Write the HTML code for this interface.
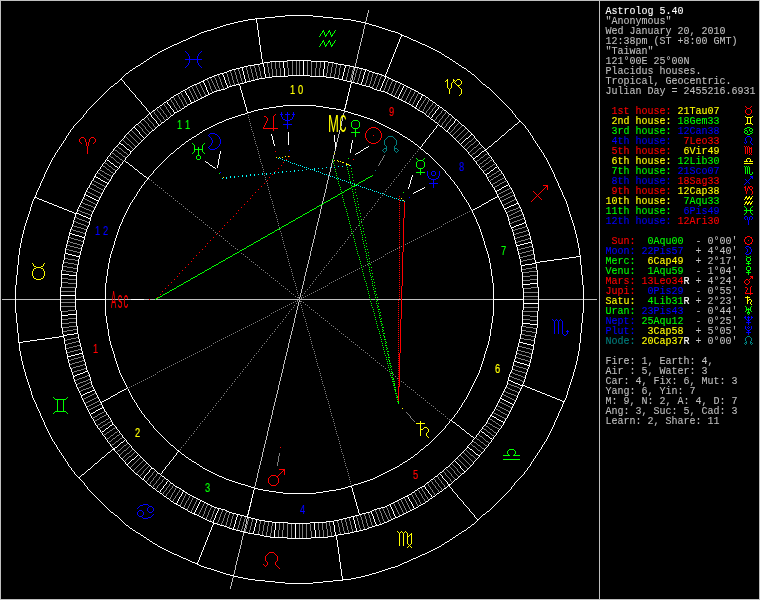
<!DOCTYPE html>
<html><head><meta charset="utf-8"><title>Astrolog 5.40</title>
<style>html,body{margin:0;padding:0;background:#000;overflow:hidden}svg{display:block}text{font-family:"Liberation Mono","DejaVu Sans Mono",monospace;white-space:pre}.s{font-size:10px;stroke-width:.1px}.h{font-size:13.4px}.o{font-family:"Liberation Sans","DejaVu Sans",sans-serif}</style></head>
<body>
<svg width="760" height="600" viewBox="0 0 760 600">
<rect width="760" height="600" fill="#000"/>
<g fill="none" stroke-width="1" shape-rendering="crispEdges">
<path transform="translate(0 .5)" stroke="#ffffff" d="m285 15h28m-38 1h10m28 0h10m-58 1h10m48 0h10m-78 1h10m68 0h10m-95 1h7m88 0h8m-108 1h5m103 0h5m-118 1h5m113 0h5m-127 1h4m123 0h4m-135 1h4m131 0h4m-143 1h4m139 0h3m-149 1h3m146 0h4m-156 1h3m153 0h3m-162 1h3m159 0h3m-168 1h3m165 0h3m-174 1h3m171 0h3m-181 1h4m177 0h3m-187 1h3m184 0h4m-194 1h3m191 0h3m-199 1h2m197 0h2m-203 1h2m201 0h1m-206 1h2m204 0h3m-212 1h3m209 0h3m-217 1h2m215 0h2m-221 1h2m219 0h2m-225 1h2m223 0h2m-230 1h3m227 0h3m-235 1h2m233 0h2m-239 1h2m237 0h2m-243 1h2m241 0h2m-248 1h3m245 0h3m-253 1h2m251 0h2m-257 1h2m255 0h2m-261 1h2m259 0h2m-265 1h2m263 0h2m-269 1h2m267 0h2m-273 1h2m271 0h2m-277 1h2m275 0h2m-281 1h2m279 0h2m-284 1h1m283 0h1m-287 1h2m285 0h2m-291 1h2m289 0h1m-293 1h1m292 0h2m-297 1h2m295 0h2m-300 1h1m299 0h1m-303 1h2m301 0h2m-306 1h1m140 0h24m141 0h1m-309 1h2m124 0h17m24 0h17m125 0h2m-312 1h1m120 0h6m58 0h6m121 0h1m-315 1h2m117 0h2m1 0h1m70 0h4m118 0h2m-318 1h1m113 0h6m78 0h6m114 0h1m-321 1h2m108 0h6m90 0h6m109 0h2m-325 1h2m106 0h4m102 0h4m107 0h1m-327 1h1m104 0h4m110 0h5m103 0h2m-331 1h2m101 0h4m119 0h4m101 0h2m-334 1h1m99 0h4m127 0h4m99 0h1m-337 1h2m97 0h3m135 0h2m98 0h1m-339 1h1m97 0h2m140 0h3m96 0h2m-342 1h1m95 0h3m145 0h3m95 0h1m-345 1h2m92 0h4m151 0h4m92 0h1m-347 1h1m91 0h3m159 0h3m90 0h2m-350 1h1m89 0h3m71 0h22m72 0h2m90 0h1m-352 1h1m88 0h2m58 0h16m22 0h16m58 0h1m1 0h1m88 0h1m-354 1h1m86 0h3m53 0h7m54 0h8m53 0h2m87 0h1m-270 1h2m50 0h6m69 0h5m50 0h2m86 0h1m-358 1h2m83 0h2m48 0h4m80 0h4m48 0h2m85 0h1m-360 1h1m2 0h1m81 0h1m46 0h4m88 0h4m46 0h2m84 0h1m-362 1h1m4 0h1m77 0h3m43 0h4m96 0h4m44 0h3m82 0h1m-364 1h1m81 0h2m43 0h1m1 0h1m104 0h4m43 0h2m81 0h1m-367 1h2m80 0h2m41 0h4m111 0h4m41 0h2m80 0h1m-369 1h1m10 0h1m68 0h3m39 0h4m119 0h3m40 0h2m79 0h2m-372 1h1m12 0h1m65 0h2m38 0h4m126 0h4m38 0h2m79 0h1m-375 1h2m14 0h1m62 0h2m37 0h3m134 0h4m36 0h2m78 0h1m-377 1h1m17 0h1m59 0h2m38 0h1m141 0h2m36 0h2m77 0h2m-380 1h1m77 0h1m37 0h2m145 0h2m36 0h2m77 0h1m-382 1h1m76 0h2m34 0h4m149 0h3m35 0h2m76 0h1m-384 1h1m22 0h1m52 0h2m32 0h4m156 0h4m33 0h2m75 0h1m-386 1h1m24 0h1m49 0h2m31 0h3m164 0h4m31 0h2m74 0h1m-388 1h1m26 0h1m47 0h1m31 0h2m171 0h2m31 0h1m74 0h1m-390 1h1m28 0h1m44 0h2m30 0h2m175 0h2m30 0h2m73 0h1m-392 1h1m30 0h1m41 0h2m31 0h1m179 0h2m30 0h2m72 0h1m-394 1h1m71 0h2m11 0h1m18 0h2m183 0h2m29 0h3m71 0h1m-396 1h1m71 0h1m30 0h2m187 0h2m30 0h1m71 0h1m-398 1h1m35 0h1m34 0h2m29 0h2m191 0h2m29 0h2m70 0h1m-400 1h1m37 0h1m32 0h1m29 0h2m195 0h1m30 0h1m70 0h1m-402 1h1m39 0h1m30 0h1m28 0h2m199 0h2m28 0h1m70 0h1m-404 1h1m41 0h1m27 0h2m27 0h2m203 0h2m16 0h1m10 0h2m69 0h1m-406 1h1m43 0h1m25 0h1m27 0h2m207 0h2m27 0h1m69 0h1m-408 1h1m68 0h2m25 0h3m211 0h2m26 0h2m68 0h1m-410 1h1m68 0h1m26 0h2m215 0h2m26 0h1m68 0h1m-412 1h1m48 0h1m19 0h1m5 0h1m19 0h2m219 0h2m25 0h1m68 0h1m-414 1h1m50 0h1m16 0h2m7 0h1m17 0h1m95 0h33m95 0h1m25 0h2m67 0h1m-416 1h1m52 0h1m14 0h1m25 0h2m89 0h7m33 0h7m89 0h2m25 0h1m67 0h1m-418 1h1m54 0h1m11 0h2m25 0h1m84 0h7m47 0h6m85 0h2m24 0h2m66 0h1m-420 1h1m66 0h1m14 0h1m10 0h2m79 0h6m60 0h7m79 0h2m25 0h1m66 0h1m-422 1h1m66 0h1m16 0h1m8 0h1m76 0h5m73 0h5m76 0h1m19 0h1m5 0h1m66 0h1m-424 1h1m59 0h1m5 0h2m24 0h2m73 0h4m83 0h4m73 0h2m16 0h1m7 0h2m65 0h1m-364 1h1m3 0h1m24 0h2m72 0h3m91 0h3m72 0h2m24 0h1m-296 1h1m22 0h3m70 0h4m97 0h3m71 0h2m23 0h1m-363 1h1m63 0h2m94 0h2m104 0h3m70 0h1m9 0h1m13 0h1m64 0h1m-430 1h1m63 0h1m24 0h1m67 0h4m109 0h4m67 0h1m7 0h1m15 0h2m63 0h1m-368 1h1m23 0h2m65 0h3m117 0h3m65 0h1m24 0h1m-306 1h1m23 0h1m64 0h3m123 0h3m63 0h2m23 0h1m-371 1h1m62 0h1m6 0h1m16 0h1m62 0h3m129 0h3m62 0h1m1 0h1m21 0h1m62 0h1m-436 1h1m62 0h1m8 0h1m14 0h1m60 0h3m135 0h3m60 0h1m23 0h1m62 0h1m-438 1h1m61 0h2m10 0h1m11 0h2m58 0h3m141 0h3m58 0h2m22 0h2m61 0h1m-440 1h1m61 0h1m13 0h1m9 0h1m58 0h2m147 0h2m58 0h1m23 0h1m-380 1h1m61 0h1m23 0h1m57 0h2m151 0h2m57 0h1m23 0h1m60 0h2m-444 1h1m61 0h1m22 0h2m55 0h3m155 0h2m56 0h2m22 0h1m58 0h1m2 0h1m-446 1h1m61 0h1m18 0h1m3 0h1m55 0h2m160 0h2m56 0h1m15 0h1m6 0h1m56 0h1m4 0h1m-448 1h1m60 0h2m22 0h1m54 0h2m164 0h2m55 0h1m13 0h1m8 0h1m53 0h2m6 0h1m-450 1h1m60 0h1m22 0h2m53 0h2m168 0h2m52 0h1m1 0h1m11 0h1m10 0h2m50 0h1m9 0h1m-368 1h1m53 0h2m172 0h2m53 0h2m8 0h1m13 0h1m48 0h1m-381 1h2m21 0h1m52 0h2m176 0h2m53 0h1m22 0h1m46 0h1m-441 1h1m59 0h1m2 0h1m19 0h1m51 0h2m180 0h2m44 0h1m7 0h1m22 0h1m44 0h1m14 0h1m-456 1h1m59 0h1m4 0h1m17 0h1m50 0h2m184 0h2m41 0h1m9 0h1m3 0h1m18 0h1m41 0h2m16 0h1m-398 1h1m6 0h1m14 0h2m49 0h2m188 0h2m50 0h1m22 0h1m39 0h1m-380 1h1m8 0h1m12 0h1m50 0h1m192 0h2m49 0h2m21 0h1m37 0h1m-439 1h1m58 0h1m21 0h1m49 0h2m195 0h2m33 0h1m15 0h1m21 0h1m35 0h1m22 0h1m-403 1h1m21 0h1m49 0h1m199 0h1m31 0h1m17 0h1m55 0h1m-380 1h1m13 0h1m7 0h1m48 0h2m201 0h2m28 0h1m19 0h1m20 0h2m31 0h1m-438 1h1m57 0h1m15 0h1m5 0h1m48 0h1m205 0h1m48 0h1m18 0h1m2 0h1m28 0h2m27 0h1m-390 1h1m3 0h1m47 0h2m207 0h2m47 0h1m16 0h1m31 0h1m-359 1h1m1 0h1m46 0h2m211 0h2m21 0h1m24 0h1m14 0h1m31 0h1m-378 1h1m20 0h1m46 0h1m215 0h1m19 0h1m26 0h1m11 0h2m7 0h1m23 0h1m-378 1h1m20 0h1m45 0h2m217 0h2m16 0h1m28 0h1m9 0h1m10 0h1m21 0h1m-435 1h1m56 0h1m20 0h1m45 0h1m221 0h1m45 0h1m7 0h1m12 0h1m19 0h1m36 0h1m-415 1h1m20 0h1m44 0h2m223 0h2m44 0h1m5 0h1m14 0h1m16 0h2m-357 1h1m44 0h1m227 0h1m10 0h1m33 0h1m3 0h1m31 0h1m-433 1h1m56 0h2m18 0h1m44 0h1m229 0h1m8 0h1m35 0h1m1 0h1m31 0h1m42 0h1m-419 1h1m2 0h2m15 0h1m43 0h2m231 0h2m43 0h1m19 0h1m11 0h1m-376 1h1m5 0h1m13 0h1m43 0h1m235 0h1m43 0h1m19 0h1m9 0h1m-432 1h1m55 0h1m7 0h1m11 0h1m43 0h1m187 0h1m49 0h1m2 0h1m40 0h1m19 0h1m6 0h2m47 0h1m-424 1h1m9 0h1m9 0h1m43 0h1m186 0h2m51 0h2m42 0h1m19 0h1m4 0h1m-375 1h1m11 0h1m7 0h1m42 0h2m185 0h2m98 0h1m19 0h1m2 0h1m-430 1h1m68 0h2m4 0h1m42 0h1m186 0h1m57 0h2m42 0h1m19 0h2m53 0h1m-412 1h1m2 0h1m42 0h1m185 0h2m60 0h1m42 0h1m17 0h2m-374 1h1m18 0h1m42 0h1m185 0h1m63 0h1m42 0h1m14 0h2m2 0h1m-431 1h1m54 0h1m61 0h1m184 0h2m65 0h1m55 0h1m5 0h1m54 0h1m-372 1h2m183 0h2m68 0h2m52 0h1m-352 1h1m40 0h1m184 0h1m72 0h1m40 0h1m9 0h1m-371 1h1m18 0h1m40 0h1m259 0h1m40 0h1m7 0h1m10 0h1m-382 1h1m18 0h1m40 0h1m261 0h1m40 0h1m4 0h2m12 0h1m-438 1h1m72 0h1m40 0h1m263 0h1m40 0h1m2 0h1m69 0h1m-380 1h1m265 0h1m40 0h2m-369 1h1m58 0h1m267 0h1m58 0h1m-386 1h2m15 0h1m39 0h1m269 0h1m39 0h1m-366 1h1m13 0h1m1 0h1m37 0h1m41 0h1m229 0h1m39 0h1m-372 1h1m5 0h1m15 0h2m34 0h1m43 0h2m228 0h1m57 0h1m-392 1h1m7 0h2m15 0h1m32 0h1m46 0h1m228 0h1m57 0h1m-383 1h1m7 0h1m7 0h1m30 0h1m48 0h1m228 0h1m38 0h1m-364 1h1m5 0h1m9 0h2m27 0h1m50 0h2m227 0h1m38 0h1m-378 1h1m13 0h2m15 0h1m25 0h1m53 0h1m227 0h1m56 0h1m-381 1h1m15 0h1m23 0h1m55 0h2m226 0h1m53 0h2m-379 1h1m15 0h1m21 0h1m58 0h1m226 0h1m37 0h1m13 0h1m-396 1h1m17 0h1m17 0h2m18 0h1m287 0h1m37 0h1m11 0h1m5 0h1m-402 1h1m17 0h1m20 0h1m16 0h1m289 0h1m37 0h1m8 0h2m7 0h1m-363 1h1m351 0h1m-352 1h1m349 0h1m-394 1h1m17 0h1m25 0h2m10 0h1m293 0h1m37 0h1m2 0h2m13 0h1m-390 1h1m28 0h1m8 0h1m295 0h1m37 0h1m-343 1h1m6 0h1m297 0h1m-355 1h1m49 0h2m3 0h1m299 0h1m-354 1h2m48 0h1m-49 1h2m47 0h2m-49 1h1m350 0h1m-360 1h1m8 0h2m43 0h1m305 0h1m53 0h1m-404 1h2m4 0h1m35 0h1m307 0h1m35 0h1m-385 1h2m0 1h2m34 1h1m311 0h1m35 0h1m-350 1h1m313 0h1m49 0h2m-4 1h2m-418 1h1m16 0h1m318 0h1m68 0h1m8 0h2m6 0h1m-371 1h1m281 0h2m34 0h1m42 0h1m-82 1h2m77 0h2m-83 1h2m77 0h2m-361 1h1m277 0h2m42 0h1m34 0h1m-82 1h2m-3 1h1m-328 2h2m0 1h2m45 0h1m327 0h1m34 0h1m-465 1h3m53 0h2m403 0h2m-460 1h2m53 0h2m399 0h2m-456 1h3m52 0h2m37 0h1m331 0h1m25 0h2m-451 1h2m52 0h3m390 0h2m-447 1h3m441 0h1m-442 1h2m82 0h1m335 0h1m18 0h2m-439 1h3m432 0h2m30 0h3m-467 1h2m428 0h2m30 0h2m-462 1h3m424 0h1m29 0h3m-457 1h2m420 0h2m28 0h2m-452 1h3m415 0h2m28 0h2m-447 1h2m411 0h2m27 0h3m-443 1h3m404 0h1m1 0h2m-408 1h2m0 1h3m0 1h2m0 1h5m0 1h2m0 1h2m0 1h3m0 1h2m0 1h2m434 4h1m-3 1h2m-5 1h3m-6 1h3m-5 1h2m-5 1h3m-444 6h2m0 1h3m0 1h4m0 1h3m0 1h2m444 5h4m-8 1h4m-8 1h4m-8 1h4m-454 8h2m0 1h4m0 1h4m0 1h4m496 0h4m-11 1h7m-14 1h7m-15 1h8m-15 1h7m-14 1h7m-12 1h5m-8 1h4m-11 1h7m-10 1h3m-463 9h7m0 1h7m454 8h7m-14 1h7m-469 11h14m0 4h30m26 0h13m350 0h30m0 4h14m-470 11h8m-14 1h6m455 8h7m0 1h7m-463 9h3m-10 1h7m-11 1h4m-8 1h5m-12 1h7m-14 1h7m-15 1h8m-15 1h7m-14 1h7m-10 1h3m496 0h4m0 1h4m0 1h4m0 1h2m-454 8h4m-8 1h4m-8 1h4m-7 1h3m443 5h3m0 1h3m0 1h4m0 1h3m0 1h2m-444 6h3m-5 1h2m-5 1h3m-6 1h3m-5 1h2m-3 1h1m434 4h2m0 1h2m0 1h2m0 1h3m0 1h2m0 1h5m0 1h2m-400 1h1m399 0h3m-404 1h1m403 0h2m-408 1h2m406 0h3m-443 1h3m27 0h2m411 0h2m-447 1h2m28 0h2m415 0h3m-453 1h3m28 0h2m420 0h2m-457 1h2m30 0h1m424 0h3m-462 1h2m30 0h2m428 0h2m-465 1h1m30 0h2m432 0h3m-439 1h2m437 0h2m-442 1h1m441 0h3m-447 1h2m390 0h2m53 0h2m-451 1h2m25 0h1m331 0h1m36 0h2m53 0h3m-456 1h2m398 0h2m54 0h2m-460 1h2m402 0h2m54 0h3m-465 1h1m34 0h1m327 0h1m44 0h2m0 1h2m0 1h2m-411 3h1m34 0h1m321 0h1m-361 1h2m-4 1h2m-4 1h2m42 0h1m317 0h1m-364 1h1m9 0h1m387 0h1m-401 1h2m-4 1h2m49 0h1m313 0h1m-350 1h1m35 0h1m311 0h1m34 1h2m0 1h2m-385 1h1m35 0h1m307 0h1m35 0h1m4 0h2m-404 1h1m53 0h1m305 0h1m43 0h1m9 0h1m-360 1h1m349 0h2m-351 1h1m301 0h2m47 0h2m-49 1h1m48 0h2m-50 1h2m49 0h1m-355 1h1m297 0h1m6 0h1m-343 1h1m37 0h1m295 0h1m8 0h1m28 0h1m-390 1h1m13 0h2m2 0h1m37 0h1m293 0h1m10 0h2m25 0h1m17 0h1m-394 1h1m5 0h1m343 0h1m23 0h1m-376 1h1m351 0h1m-363 1h1m7 0h2m46 0h1m289 0h1m16 0h1m38 0h1m-402 1h1m5 0h1m11 0h1m37 0h1m287 0h1m18 0h2m17 0h1m17 0h1m-396 1h1m13 0h1m37 0h1m285 0h1m21 0h1m15 0h1m-379 1h2m53 0h1m283 0h1m23 0h1m15 0h1m-381 1h1m56 0h1m281 0h1m25 0h1m15 0h2m13 0h1m-378 1h1m38 0h1m279 0h1m27 0h2m9 0h1m5 0h1m-364 1h1m38 0h1m277 0h1m30 0h1m7 0h1m7 0h1m-383 1h1m57 0h1m275 0h1m32 0h1m15 0h2m7 0h1m-392 1h1m57 0h1m273 0h1m34 0h2m15 0h1m5 0h1m-372 1h1m39 0h1m271 0h1m37 0h1m1 0h1m13 0h1m-366 1h1m39 0h1m269 0h1m39 0h1m15 0h2m-386 1h1m18 0h1m39 0h1m267 0h1m39 0h1m18 0h1m-369 1h1m41 0h1m265 0h1m-380 1h1m69 0h1m43 0h1m263 0h1m113 0h1m-438 1h1m12 0h2m4 0h1m40 0h1m261 0h1m40 0h1m18 0h1m-382 1h1m10 0h1m7 0h1m40 0h1m259 0h1m40 0h1m18 0h1m-435 1h1m63 0h1m9 0h1m40 0h1m257 0h1m40 0h1m73 0h1m-426 1h1m11 0h1m40 0h2m253 0h2m40 0h1m-358 1h1m5 0h1m55 0h1m251 0h1m61 0h1m-376 1h1m2 0h2m57 0h1m249 0h1m42 0h2m17 0h1m-374 1h1m18 0h1m42 0h1m247 0h1m42 0h1m2 0h1m15 0h1m-428 1h1m53 0h3m18 0h1m42 0h1m244 0h2m42 0h1m4 0h2m68 0h1m-430 1h1m22 0h1m42 0h2m241 0h1m43 0h1m7 0h1m-363 1h1m4 0h1m19 0h1m42 0h2m239 0h1m43 0h1m9 0h1m9 0h1m-424 1h1m47 0h2m6 0h1m19 0h1m40 0h1m2 0h1m237 0h1m43 0h1m11 0h1m7 0h1m55 0h1m-432 1h1m9 0h1m19 0h1m43 0h1m235 0h1m43 0h1m13 0h1m5 0h1m-376 1h1m11 0h1m19 0h1m43 0h2m231 0h2m43 0h1m15 0h2m2 0h1m-419 1h1m42 0h1m31 0h1m1 0h1m35 0h1m8 0h1m229 0h1m44 0h1m18 0h2m56 0h1m-433 1h1m31 0h1m3 0h1m33 0h1m10 0h1m227 0h1m44 0h1m-357 1h2m16 0h1m14 0h1m5 0h1m44 0h2m223 0h2m44 0h1m20 0h1m-415 1h1m36 0h1m19 0h1m12 0h1m7 0h1m45 0h1m221 0h1m45 0h1m20 0h1m56 0h1m-435 1h1m21 0h1m9 0h2m9 0h1m28 0h1m16 0h2m217 0h2m45 0h1m20 0h1m-378 1h1m23 0h1m7 0h1m12 0h1m26 0h1m19 0h1m215 0h1m46 0h1m20 0h1m-410 1h1m31 0h1m25 0h1m5 0h1m14 0h1m24 0h1m21 0h2m211 0h2m46 0h1m1 0h1m18 0h1m57 0h1m-436 1h1m31 0h1m16 0h1m47 0h2m207 0h2m47 0h1m3 0h1m-362 1h2m31 0h1m18 0h1m48 0h1m205 0h1m48 0h1m5 0h1m-364 1h1m31 0h2m20 0h1m19 0h1m28 0h2m201 0h2m48 0h1m7 0h1m13 0h1m-380 1h1m55 0h1m17 0h1m31 0h1m199 0h1m49 0h1m9 0h1m11 0h1m-403 1h1m22 0h1m35 0h1m21 0h1m15 0h1m33 0h2m195 0h2m49 0h1m21 0h1m58 0h1m-460 1h1m20 0h1m37 0h1m72 0h1m192 0h2m49 0h2m21 0h1m58 0h1m-439 1h1m39 0h1m20 0h3m49 0h2m188 0h2m50 0h1m15 0h1m6 0h1m-381 1h2m41 0h1m18 0h1m3 0h1m9 0h1m40 0h2m184 0h2m51 0h1m17 0h1m4 0h1m-396 1h1m14 0h1m44 0h1m22 0h1m7 0h1m43 0h2m180 0h2m52 0h1m19 0h1m2 0h1m59 0h1m-454 1h1m12 0h1m46 0h1m22 0h1m52 0h2m176 0h2m53 0h1m21 0h2m59 0h1m-441 1h1m48 0h1m13 0h1m8 0h1m53 0h2m172 0h2m53 0h2m-358 1h1m50 0h1m11 0h1m10 0h2m1 0h1m51 0h2m168 0h2m54 0h1m22 0h2m-389 1h1m6 0h2m52 0h2m8 0h1m13 0h1m54 0h2m164 0h2m55 0h1m1 0h1m20 0h1m61 0h1m-448 1h1m4 0h1m56 0h1m6 0h1m15 0h1m55 0h2m160 0h2m56 0h1m3 0h1m18 0h1m61 0h1m-446 1h1m2 0h1m58 0h1m22 0h2m55 0h3m155 0h2m56 0h2m22 0h1m61 0h1m-444 1h2m60 0h1m23 0h1m57 0h2m151 0h2m57 0h1m23 0h1m61 0h1m-380 1h1m23 0h1m58 0h2m147 0h2m58 0h1m9 0h1m13 0h1m61 0h1m-440 1h1m61 0h2m22 0h2m58 0h3m141 0h3m58 0h2m11 0h1m10 0h2m61 0h1m-438 1h1m62 0h1m23 0h1m60 0h3m135 0h3m60 0h1m14 0h1m8 0h1m62 0h1m-436 1h1m62 0h1m21 0h1m1 0h1m62 0h3m129 0h3m62 0h1m16 0h1m6 0h1m62 0h1m-434 1h1m62 0h1m23 0h1m64 0h3m123 0h3m63 0h2m23 0h1m62 0h1m-369 1h1m23 0h2m65 0h3m117 0h3m65 0h1m24 0h1m-304 1h1m16 0h1m7 0h1m67 0h4m109 0h4m67 0h1m22 0h3m-366 1h1m63 0h2m13 0h1m9 0h1m70 0h3m104 0h2m94 0h1m64 0h1m-428 1h1m64 0h1m23 0h2m71 0h3m97 0h4m70 0h3m22 0h1m64 0h1m-361 1h1m24 0h2m72 0h3m91 0h3m72 0h2m24 0h1m3 0h1m-298 1h2m7 0h1m16 0h2m73 0h4m83 0h4m73 0h2m24 0h2m5 0h1m-364 1h1m66 0h1m5 0h1m19 0h1m76 0h5m73 0h5m76 0h1m8 0h1m16 0h1m66 0h1m-422 1h1m66 0h1m25 0h2m79 0h6m60 0h7m79 0h2m10 0h1m14 0h1m66 0h1m-420 1h1m66 0h2m24 0h2m84 0h7m47 0h6m85 0h1m25 0h2m11 0h1m54 0h1m-418 1h1m67 0h1m25 0h2m89 0h7m33 0h7m89 0h2m25 0h1m14 0h1m52 0h1m-416 1h1m67 0h2m25 0h1m95 0h33m95 0h1m17 0h1m7 0h2m16 0h1m50 0h1m-414 1h1m68 0h1m25 0h2m219 0h2m19 0h1m5 0h1m19 0h1m48 0h1m-412 1h1m68 0h1m26 0h2m215 0h2m26 0h1m68 0h1m-410 1h1m68 0h2m14 0h1m11 0h2m211 0h3m25 0h2m68 0h1m-408 1h1m69 0h1m27 0h2m207 0h2m27 0h1m25 0h1m43 0h1m-406 1h1m69 0h2m27 0h2m203 0h2m27 0h2m27 0h1m41 0h1m-404 1h1m70 0h1m28 0h2m199 0h2m28 0h1m30 0h1m39 0h1m-402 1h1m70 0h1m29 0h2m195 0h2m29 0h1m32 0h1m37 0h1m-400 1h1m70 0h2m29 0h2m191 0h2m13 0h1m15 0h2m34 0h1m35 0h1m-398 1h1m71 0h1m30 0h2m187 0h2m30 0h1m71 0h1m-396 1h1m71 0h3m29 0h2m183 0h2m30 0h2m71 0h1m-394 1h1m72 0h2m30 0h2m179 0h1m31 0h2m41 0h1m30 0h1m-392 1h1m73 0h2m30 0h2m175 0h2m30 0h2m44 0h1m28 0h1m-390 1h1m74 0h1m31 0h2m171 0h2m31 0h1m47 0h1m26 0h1m-388 1h1m74 0h2m31 0h3m164 0h4m31 0h2m49 0h1m24 0h1m-386 1h1m75 0h2m32 0h4m156 0h4m33 0h2m52 0h1m22 0h1m-384 1h1m76 0h2m34 0h4m149 0h3m35 0h2m76 0h1m-382 1h1m77 0h1m37 0h2m145 0h2m36 0h2m77 0h1m-380 1h1m77 0h2m37 0h2m141 0h1m37 0h2m60 0h1m16 0h2m-378 1h2m77 0h2m37 0h3m134 0h4m36 0h2m63 0h1m14 0h1m-374 1h1m78 0h3m37 0h4m126 0h4m38 0h2m66 0h1m12 0h1m-372 1h1m79 0h3m39 0h4m119 0h3m40 0h2m69 0h1m9 0h2m-370 1h2m80 0h2m41 0h4m111 0h4m41 0h2m80 0h1m-366 1h1m81 0h2m43 0h4m103 0h4m43 0h2m81 0h1m-364 1h1m82 0h2m44 0h4m96 0h4m44 0h3m77 0h1m4 0h1m-362 1h1m83 0h2m46 0h4m88 0h4m46 0h2m81 0h1m2 0h1m-360 1h1m84 0h2m48 0h4m80 0h4m48 0h2m84 0h2m-358 1h1m85 0h2m50 0h6m69 0h5m50 0h2m-269 1h1m86 0h3m53 0h7m54 0h8m53 0h2m87 0h1m-354 1h1m88 0h1m59 0h16m22 0h16m58 0h3m88 0h1m-352 1h1m89 0h3m71 0h22m72 0h2m90 0h1m-350 1h1m91 0h3m159 0h3m90 0h2m-348 1h2m92 0h4m151 0h4m92 0h1m-344 1h1m95 0h3m145 0h3m95 0h1m-342 1h1m97 0h2m140 0h3m96 0h2m-340 1h2m97 0h3m135 0h2m98 0h1m-336 1h1m99 0h4m127 0h4m99 0h1m-334 1h2m101 0h4m119 0h4m101 0h2m-331 1h1m104 0h4m110 0h5m103 0h2m-328 1h2m106 0h4m102 0h4m107 0h1m-324 1h2m108 0h6m90 0h6m109 0h2m-321 1h1m113 0h6m78 0h6m114 0h1m-318 1h2m117 0h4m70 0h2m1 0h1m118 0h2m-315 1h1m120 0h6m58 0h6m121 0h1m-312 1h2m124 0h17m24 0h17m125 0h2m-309 1h1m140 0h24m141 0h1m-306 1h2m301 0h2m-303 1h1m299 0h1m-300 1h2m295 0h2m-297 1h1m292 0h2m-294 1h2m289 0h1m-290 1h2m285 0h2m-287 1h1m283 0h1m-284 1h2m279 0h2m-281 1h2m275 0h2m-277 1h2m271 0h2m-273 1h2m267 0h2m-269 1h2m263 0h2m-265 1h2m259 0h2m-261 1h2m255 0h2m-257 1h2m251 0h2m-253 1h3m245 0h3m-248 1h2m241 0h2m-243 1h2m237 0h2m-239 1h2m233 0h2m-235 1h3m227 0h3m-230 1h2m223 0h2m-225 1h2m219 0h2m-221 1h2m215 0h2m-217 1h3m209 0h3m-212 1h3m204 0h2m-206 1h1m201 0h2m-203 1h2m197 0h2m-199 1h3m191 0h3m-194 1h3m184 0h4m-188 1h4m177 0h3m-180 1h3m171 0h3m-174 1h3m165 0h3m-168 1h3m159 0h3m-162 1h3m153 0h3m-156 1h3m146 0h4m-150 1h4m139 0h3m-142 1h4m131 0h4m-135 1h4m123 0h4m-127 1h5m113 0h5m-118 1h5m103 0h5m-108 1h7m87 0h9m-96 1h10m68 0h10m-78 1h10m48 0h10m-58 1h10m28 0h10m-38 1h28"/>
<path transform="translate(.5 0)" stroke="#ffffff" d="m15 285v28m1-38v10m0 28v10m1-58v10m0 48v10m1-78v10m0 68v10m1-95v7m0 87v9m1-108v5m0 103v5m1-118v5m0 113v5m1-127v4m0 123v4m1-135v4m0 131v4m1-143v4m0 139v3m1-149v3m0 146v4m1-156v3m0 153v3m1-162v3m0 159v3m1-168v3m0 165v3m1-174v3m0 171v3m1-181v4m0 177v3m1-187v3m0 184v4m1-194v3m0 191v3m1-199v2m0 197v2m1-202v1m0 201v2m1-207v2m0 205v2m1-212v3m0 209v3m1-217v2m0 215v2m1-221v2m0 219v2m1-225v2m0 223v2m1-230v3m0 227v3m1-235v2m0 233v2m1-239v2m0 237v2m1-243v2m0 241v2m1-248v3m0 245v3m1-253v2m0 251v2m1-257v2m0 255v2m1-261v2m0 259v2m1-265v2m0 263v2m1-269v2m0 267v2m1-273v2m0 271v2m1-277v2m0 275v2m1-281v2m0 279v2m2-286v2m0 285v2m1-291v2m1 290v2m1-297v2m0 295v2m2-302v2m0 301v2m1-165v24m1-167v2m0 124v17m0 24v17m0 125v2m1-191v6m0 58v6m1-193v2m0 117v4m0 70v1m0 2v1m0 118v2m1-204v6m0 78v6m1-206v2m0 108v6m0 90v6m0 109v2m1-325v2m0 106v4m0 102v4m1-114v4m0 110v5m0 103v2m1-331v2m0 101v4m0 119v4m0 101v2m1-234v4m0 127v4m1-237v2m0 97v3m0 135v2m1-142v2m0 140v3m0 96v2m1-246v3m0 145v3m1-249v2m0 92v4m0 151v4m1-162v3m0 159v3m0 90v2m1-260v3m0 71v11m0 1v10m0 72v2m1-172v1m0 59v16m0 22v16m0 58v3m1-178v3m0 53v7m0 54v8m0 53v2m1-182v2m0 50v6m0 69v5m0 50v2m1-186v2m0 48v1m0 1v2m0 80v4m0 48v2m0 85v1m1-276v2m0 46v4m0 88v4m0 46v2m1-194v2m0 44v4m0 96v4m0 44v3m1-199v2m0 43v3m0 104v2m0 1v1m0 43v2m1-285v2m0 80v2m0 41v4m0 111v4m0 41v2m1-208v3m0 39v4m0 119v3m0 40v2m0 79v2m1-293v3m0 37v4m0 126v4m0 38v2m1-295v2m0 77v2m0 37v3m0 134v4m0 36v2m1-220v2m0 37v2m0 141v1m0 37v2m0 77v2m1-264v2m0 145v2m0 36v2m1-227v2m0 34v4m0 149v3m0 35v2m1-231v2m0 32v4m0 156v4m0 33v2m1-235v2m0 31v3m0 164v4m0 31v2m1-206v2m0 171v2m1-209v2m0 30v2m0 175v2m0 30v2m1-244v1m0 30v2m0 179v1m0 31v2m1-249v3m0 29v2m0 183v2m0 30v2m1-221v2m0 187v2m1-224v2m0 29v2m0 191v2m0 29v2m1-227v1m0 195v2m1-201v2m0 199v2m1-234v2m0 27v2m0 203v1m0 28v2m1-238v2m0 206v3m1-241v2m0 26v2m0 211v3m0 25v2m1-245v2m0 216v1m1-221v2m0 219v2m1-251v2m0 121v33m0 121v2m1-254v2m0 89v7m0 33v7m0 89v2m1-257v2m0 25v1m0 84v7m0 47v6m0 111v2m1-260v1m0 80v6m0 60v7m0 79v2m1-159v5m0 73v5m1-188v2m0 24v2m0 73v4m0 83v4m0 73v2m0 24v2m1-269v2m0 72v3m0 91v3m0 72v2m1-247v2m0 71v3m0 97v3m0 71v3m1-276v2m0 94v3m0 103v3m1-113v4m0 109v4m0 90v1m0 1v1m1-280v2m0 65v3m0 117v3m1-126v3m0 123v3m0 63v2m1-197v3m0 129v3m1-138v3m0 135v3m1-228v1m0 23v2m0 58v3m0 141v3m0 58v2m0 22v2m1-233v2m0 147v2m1-297v1m0 143v2m0 151v2m1-215v2m0 55v3m0 155v2m0 56v2m1-220v2m0 160v2m1-299v2m0 52v2m0 77v2m0 164v2m1-225v2m0 53v2m0 168v2m0 77v2m1-253v2m0 172v2m0 53v2m1-233v2m0 254v1m1-259v2m0 180v2m1-303v2m0 115v2m0 184v2m1-242v3m0 49v2m0 188v2m1 0v2m0 49v2m1-248v2m0 195v2m2-273v1m0 70v2m0 201v2m1-307v2m1 97v2m0 207v2m1-213v2m0 211v2m2-275v2m0 55v2m0 217v2m2-308v2m0 82v2m0 223v2m2 65v1m1-297v2m0 231v2m0 59v2m2-370v2m1 69v1m1-3v1m1-66v1m0 308v2m0 47v2m1-358v1m1 0v2m0 350v1m2-297v2m0 253v2m3-307v2m2 1v1m2 365v2m2-21v2m1 13v2m2-21v2m1 13v2m1-382v2m2 358v2m1-358v2m3 2v2m0 345v2m1-346v1m2 339v2m1 46v2m1-4v2m1-4v2m2-5v2m1-4v2m3-403v2m1 0v2m2 1v2m1 0v2m1 0v2m4 410v1m1-3v2m1-4v2m1-4v2m0 54v1m0 1v1m1-61v2m0 54v2m1-60v2m0 53v3m1-59v1m0 53v2m1-5v3m1-5v2m1-472v1m0 1v1m0 464v3m1-467v2m0 460v2m1-462v2m0 455v3m1-458v3m0 450v2m1-452v2m0 445v3m1-448v3m0 440v2m1-5v3m1-5v2m1-5v3m1-5v2m1-7v5m1-7v2m1-5v3m1-5v2m1-350v3m0 343v2m1-354v6m0 344v2m1-357v5m1-8v3m2-80v1m1 0v2m1 0v3m1 0v3m1 0v2m1 0v3m6 439v2m1-5v3m1-7v4m1-7v3m1-5v2m2-432v1m1 0v4m1 0v3m1-25v3m0 22v4m1-26v4m0 22v3m1-25v4m0 21v4m1-25v4m0 21v3m1 0v4m1 0v1m0 402v2m1-6v4m1-8v4m1-8v4m1-8v4m1-8v4m1-8v4m0 37v2m1-44v1m0 37v4m1-8v4m1-508v4m0 497v3m1-500v7m1 0v7m1 0v8m1 0v7m1 0v7m1 0v5m1 0v3m1 0v7m1 0v3m6 57v2m1 0v4m1 0v4m1 0v2m0 384v7m1-14v7m8-468v6m1 0v8m4 56v13m7 379v14m8-477v14m11 448v7m1 0v7m8-468v7m1-14v7m9 453v3m1-390v7m0 383v7m1-390v7m0 383v3m1 0v5m1 0v7m1 0v7m1 0v8m1 0v7m1 0v7m1-500v3m0 497v3m1-507v4m1-8v4m0 36v2m1-44v2m0 36v4m1-8v4m1-8v4m1-8v4m1-8v4m1-8v4m0 61v4m1-70v1m0 59v6m0 338v1m1-348v3m0 345v4m1 0v3m0 22v3m1-25v4m0 21v4m1-25v3m0 22v4m1-26v4m0 22v3m1-25v3m1 0v4m1 0v1m2-432v2m1-5v3m1-7v4m1-7v3m1-5v2m6 439v3m1 0v2m1 0v3m1 0v3m1 0v2m1 0v1m4-437v2m1-4v2m1-5v3m1-5v2m1-4v2m1-7v5m1-7v2m1-5v3m1-5v2m1-5v3m1-5v2m0 440v3m1-448v3m0 445v2m1-452v2m0 450v2m1-457v3m0 454v3m1-462v2m0 460v2m1-467v3m0 464v1m1-470v2m1-5v3m1-5v2m0 52v3m1-60v3m0 52v2m1-59v2m0 53v2m1-60v1m0 1v1m0 53v2m1-4v2m1-4v2m5 99v2m0 308v2m1-315v3m0 312v2m1-321v4m1-7v3m0 322v2m1-329v2m0 327v2m1 0v2m3-403v2m1-4v2m1-4v2m2-5v2m0 48v1m1-53v2m1 46v2m2 339v1m1-346v2m0 345v2m3 2v2m1-358v2m2 358v2m1-382v2m1 13v2m2-21v2m1 13v2m2-21v2m4 367v2m3-307v2m0 253v2m2-298v1m0 351v2m2-357v2m0 292v2m0 62v2m1-310v2m1 240v1m1 69v2m2-370v2m0 59v2m0 231v2m1-297v1m2 65v2m0 223v2m0 82v2m2-308v2m0 217v2m1 56v2m1-276v2m0 211v2m1-213v2m0 207v2m1 97v2m1-307v2m0 201v2m0 70v1m2-273v2m0 195v2m1-4v2m0 49v1m1-295v2m0 49v2m0 188v2m1-190v2m0 184v2m0 116v2m1-304v2m0 180v2m1-258v1m0 253v2m1-179v3m0 172v2m0 53v2m1-283v1m0 53v2m0 168v2m0 77v2m1-328v2m0 77v2m0 164v2m0 132v2m1-300v2m0 160v2m1-219v2m0 55v3m0 155v2m0 56v2m1-215v2m0 151v2m0 143v1m1-297v2m0 147v2m1-233v2m0 22v2m0 58v3m0 141v3m0 58v2m0 23v1m1-228v3m0 135v3m1-138v3m0 129v3m1-132v3m0 123v3m0 63v2m1-258v2m0 65v3m0 117v3m1-120v4m0 109v4m0 91v2m1-206v3m0 103v3m1-180v3m0 71v3m0 97v3m0 71v2m1-247v2m0 72v3m0 91v3m0 72v2m1-269v2m0 24v2m0 73v4m0 83v4m0 73v2m0 24v2m1-188v5m0 73v5m1-159v2m0 79v6m0 60v7m0 80v1m1-260v2m0 110v7m0 47v6m0 85v1m0 25v2m1-257v2m0 89v7m0 33v7m0 89v2m1-254v2m0 121v33m0 121v2m1-251v2m0 219v2m1-221v1m0 216v2m1-245v2m0 25v3m0 211v2m0 26v2m1-241v3m0 206v2m1-238v2m0 28v1m0 203v2m0 27v2m1-234v2m0 199v2m1-201v2m0 195v1m1-227v2m0 29v2m0 191v2m0 29v2m1-224v2m0 187v2m1-221v2m0 30v2m0 183v2m0 29v3m1-249v2m0 31v1m0 179v2m0 30v1m1-244v2m0 30v2m0 175v2m0 30v2m1-209v2m0 171v2m1-206v2m0 31v3m0 164v4m0 31v2m1-235v2m0 32v4m0 156v4m0 33v2m1-231v2m0 34v4m0 149v3m0 35v2m1-189v2m0 145v2m0 36v2m1-224v2m0 38v1m0 141v2m0 36v2m0 77v2m1-378v2m0 77v2m0 37v3m0 134v4m0 36v2m1-216v2m0 38v4m0 126v4m0 39v1m1-212v3m0 39v4m0 119v2m0 41v2m0 79v2m1-370v2m0 80v2m0 41v4m0 111v4m0 41v2m1-203v2m0 43v1m0 1v1m0 104v4m0 43v2m1-199v2m0 44v4m0 96v4m0 44v3m1-194v1m0 46v4m0 88v4m0 46v2m1-275v1m0 84v2m0 48v4m0 80v3m0 49v2m1-186v2m0 50v6m0 69v5m0 50v2m1-182v3m0 53v7m0 54v8m0 53v2m1-177v2m0 58v16m0 22v16m0 58v1m0 1v1m1-173v3m0 71v11m0 1v10m0 72v2m1-167v3m0 159v3m0 90v2m1-348v2m0 92v4m0 151v4m1-155v3m0 145v3m1-148v2m0 140v3m0 96v2m1-340v2m0 97v3m0 135v2m1-137v4m0 127v4m1-234v2m0 101v4m0 119v4m0 101v2m1-226v2m0 1v1m0 110v5m0 103v2m1-328v2m0 106v4m0 102v4m1-216v2m0 108v6m0 90v6m0 109v2m1-207v6m0 78v6m1-203v2m0 117v2m0 72v4m0 118v2m1-194v6m0 58v6m1-190v2m0 124v17m0 24v17m0 125v2m1-168v24m1-164v2m0 301v2m2-302v2m0 295v2m1-4v2m1-294v2m1 0v2m0 285v2m2-286v2m0 279v2m1-281v2m0 275v2m1-277v2m0 271v2m1-273v2m0 267v2m1-269v2m0 263v2m1-265v2m0 259v2m1-261v2m0 255v2m1-257v2m0 251v2m1-253v3m0 245v3m1-248v2m0 241v2m1-243v2m0 237v2m1-239v2m0 233v2m1-235v3m0 227v3m1-230v2m0 223v2m1-225v2m0 219v2m1-221v2m0 215v2m1-217v3m0 209v3m1-212v2m0 205v2m1-207v2m0 201v1m1-202v2m0 197v2m1-199v3m0 191v3m1-194v3m0 184v4m1-188v4m0 177v3m1-180v3m0 171v3m1-174v3m0 165v3m1-168v3m0 159v3m1-162v3m0 153v3m1-156v3m0 146v4m1-150v4m0 139v3m1-142v4m0 131v4m1-135v4m0 123v4m1-127v5m0 113v5m1-118v5m0 103v5m1-108v7m0 88v8m1-96v10m0 68v10m1-78v10m0 48v10m1-58v10m0 28v10m1-38v28"/>
<path transform="translate(0 .5)" stroke="#bfbfbf" d="m0 0h760m-395 24h1m-19 76h1m-2 4h1m-2 4h1m-12 46h1m-333 145h13m1 0h44m46 0h25m13 0h5m1 0h5m1 0h143m1 0h70m1 0h4m1 0h25m1 0h91m46 0h44m1 0h13m-346 203h1m-2 4h1m-2 4h1m-2 4h1m-2 4h1m-15 56h1m-234 25h760"/>
<path transform="translate(.5 0)" stroke="#bfbfbf" d="m0 1v598m230-13v3m1-7v4m1-8v4m1-6v2m1-8v4m1-9v5m1-9v4m1-8v4m1-8v4m1-8v4m1-8v4m1-9v5m1-9v4m1-8v4m1-8v4m1-8v4m1-9v5m8-38v2m1-6v4m1-8v4m1-9v5m1-9v4m1-8v4m1-8v4m1-8v4m1-9v5m1-9v4m1-8v4m1-8v4m1-8v4m1-9v5m1-9v4m1-8v4m1-8v4m1-8v4m1-9v5m1-9v4m1-8v4m1-8v4m1-8v4m1-8v4m1-9v5m1-9v4m1-8v4m1-8v4m1-8v4m1-9v5m1-9v4m1-8v4m1-8v4m1-8v4m1-9v5m1-9v4m1-8v4m1-8v4m1-8v4m1-8v4m1-9v5m1-9v4m1-8v4m1-8v4m1-8v4m1-9v2m0 1v2m1-9v4m1-8v4m1-8v4m1-8v4m1-9v5m1-9v4m1-8v4m1-8v4m1-8v4m1-8v4m1-9v5m1-9v4m1-8v4m1-8v4m1-8v4m1-9v5m1-9v4m1-8v4m1-8v4m1-8v4m1-9v5m1-9v4m1-8v3m1-7v4m1-8v4m1-8v4m1-9v5m1-9v4m1-8v4m1-8v4m1-8v4m1-9v5m1-8v3m1-8v4m1-8v2m1-4v2m1-9v5m1-9v4m1-8v4m1-8v4m1-8v4m1-9v5m1-9v4m1-8v4m1-6v2m7-33v2m1-7v5m1-9v4m1-7v3m1-8v4m1-8v4m1-9v5m1-9v4m1-8v4m1-8v4m1-8v4m1-8v4m1-9v5m1-9v4m1-8v2m1-6v4m1-8v4m1-7v3m231-12v598m160-598v598"/>
<path transform="translate(0 .5)" stroke="#7f7f7f" d="m369 72h1m-144 1h1m146 0h1m-164 5h1m185 4h1m-198 1h1m200 1h1m-206 1h1m211 2h1m-220 1h1m222 1h1m-29 1h1m-172 1h1m202 0h1m2 2h1m-25 2h1m17 1h1m-240 1h1m9 0h1m-14 2h1m9 0h1m-6 1h1m248 0h1m-253 2h1m249 1h1m-236 1h1m238 0h1m-249 1h1m252 0h1m-267 1h1m18 0h1m235 0h1m9 0h1m-256 1h1m258 0h1m-255 1h1m252 0h1m-273 1h1m5 0h1m250 0h1m9 0h1m-267 1h1m14 0h1m249 0h1m14 0h1m-290 1h1m4 0h1m263 0h1m8 0h1m-273 1h1m9 0h1m260 0h1m-267 1h1m82 0h1m177 0h1m14 0h1m-286 1h1m9 0h1m273 0h1m4 0h1m-289 1h1m4 0h1m86 0h1m179 0h1m9 0h1m4 0h1m-282 1h1m274 0h1m-291 1h1m19 0h1m80 0h1m198 0h1m4 0h1m-295 1h1m282 0h1m4 0h1m4 0h1m-293 1h1m4 0h1m84 0h1m185 0h1m4 0h1m-297 1h1m4 0h1m284 0h1m-290 1h1m4 0h1m98 0h1m194 0h1m4 0h1m-310 1h1m5 0h1m4 0h1m9 0h1m276 0h1m4 0h1m4 0h1m-308 1h1m5 0h1m4 0h1m97 0h1m196 0h1m10 0h1m-317 1h1m314 0h1m-320 1h1m4 0h1m106 0h1m190 0h1m14 0h1m-318 1h1m4 0h1m4 0h1m4 0h1m290 0h1m9 0h1m5 0h1m-322 1h1m9 0h1m4 0h1m95 0h1m192 0h1m15 0h1m-320 1h1m9 0h1m307 0h1m5 0h1m-320 1h1m5 0h1m98 0h1m201 0h1m4 0h1m5 0h1m-334 1h1m15 0h1m304 0h1m4 0h1m5 0h1m-332 1h1m10 0h1m4 0h1m103 0h1m198 0h1m4 0h1m5 0h1m5 0h1m-336 1h1m10 0h1m4 0h1m300 0h1m4 0h1m5 0h1m5 0h1m-340 1h1m5 0h1m10 0h1m107 0h1m200 0h1m5 0h1m5 0h1m-338 1h1m5 0h1m10 0h1m306 0h1m5 0h1m5 0h1m-336 1h1m5 0h1m116 0h1m198 0h1m5 0h1m5 0h1m-340 1h1m5 0h1m5 0h1m319 0h1m5 0h1m-338 1h1m5 0h1m5 0h1m115 0h1m201 0h1m5 0h1m-336 1h1m5 0h1m5 0h1m315 0h1m5 0h1m11 0h1m-346 1h1m5 0h1m5 0h1m113 0h1m205 0h1m11 0h1m-350 1h1m5 0h1m5 0h1m5 0h1m317 0h1m11 0h1m4 0h1m-353 1h1m5 0h1m5 0h1m118 0h1m202 0h1m10 0h2m4 0h1m-351 1h1m5 0h1m5 0h1m330 0h1m5 0h1m-349 1h1m5 0h1m5 0h1m116 0h1m211 0h1m5 0h1m-347 1h2m4 0h1m332 0h1m4 0h2m5 0h1m-350 1h1m4 0h1m121 0h1m208 0h1m4 0h1m6 0h1m-361 1h1m12 0h1m4 0h1m328 0h1m4 0h1m6 0h1m-359 1h1m12 0h1m125 0h1m210 0h1m5 0h2m5 0h1m-363 1h2m11 0h1m334 0h1m5 0h1m5 0h2m-367 1h1m6 0h1m135 0h1m160 0h1m47 0h1m5 0h1m5 0h1m-364 1h2m5 0h1m348 0h1m5 0h1m-361 1h1m5 0h1m134 0h1m158 0h1m52 0h1m5 0h1m-359 1h1m5 0h2m343 0h1m5 0h1m-364 1h2m5 0h2m5 0h1m131 0h1m156 0h1m57 0h2m12 0h1m-374 1h1m6 0h1m5 0h1m344 0h1m12 0h2m-372 1h1m6 0h1m136 0h1m124 0h1m28 0h1m57 0h1m12 0h1m-375 1h1m5 0h2m5 0h2m358 0h1m-373 1h2m5 0h1m6 0h1m133 0h1m152 0h1m68 0h2m5 0h2m-377 1h1m5 0h1m360 0h1m6 0h1m-374 1h1m5 0h2m138 0h1m149 0h1m68 0h1m6 0h1m-372 1h1m6 0h1m258 0h1m95 0h2m5 0h2m4 0h2m-376 1h1m143 0h1m148 0h1m66 0h1m6 0h1m5 0h1m-373 1h2m363 0h1m5 0h1m-384 1h2m12 0h1m141 0h1m145 0h1m72 0h2m4 0h2m-381 1h1m12 0h1m358 0h1m5 0h1m7 0h2m-387 1h1m153 0h1m115 0h1m26 0h1m78 0h1m7 0h1m-390 1h2m4 0h2m371 0h2m6 0h2m-387 1h1m5 0h1m150 0h1m141 0h1m76 0h1m7 0h1m-384 1h1m5 0h1m374 0h2m-382 1h2m4 0h2m148 0h1m138 0h1m83 0h1m-387 1h2m7 0h1m5 0h1m368 0h2m13 0h1m-398 1h2m6 0h1m152 0h1m137 0h1m95 0h2m-395 1h1m6 0h2m383 0h1m-399 1h2m5 0h2m6 0h1m150 0h1m134 0h1m94 0h2m5 0h1m-402 1h1m6 0h2m383 0h2m5 0h2m-400 1h2m6 0h2m153 0h1m133 0h1m92 0h1m6 0h1m-396 1h1m7 0h1m377 0h2m5 0h2m-394 1h2m159 0h1m130 0h1m91 0h1m5 0h2m-390 1h1m386 0h1m8 0h2m-397 1h2m40 0h1m115 0h1m128 0h1m96 0h2m7 0h2m-409 1h1m15 0h1m41 0h1m338 0h1m7 0h2m-406 1h2m170 0h1m126 0h1m103 0h1m6 0h2m-410 1h2m55 0h1m341 0h2m5 0h2m-413 1h1m6 0h2m167 0h1m123 0h1m101 0h2m5 0h2m-410 1h2m6 0h2m53 0h1m336 0h1m6 0h1m-406 1h2m6 0h2m53 0h1m109 0h1m122 0h1m106 0h2m-403 1h1m7 0h2m389 0h2m-408 1h1m7 0h2m60 0h1m108 0h1m119 0h1m105 0h1m-405 1h2m7 0h2m60 0h1m347 0h2m-419 1h2m7 0h2m165 0h1m117 0h1m120 0h2m-415 1h2m67 0h1m341 0h2m-420 1h1m8 0h2m171 0h1m115 0h1m117 0h2m-417 1h2m8 0h2m65 0h1m335 0h2m7 0h2m-422 1h2m8 0h2m65 0h1m101 0h1m113 0h1m115 0h2m7 0h2m-418 1h2m404 0h1m7 0h2m-414 1h2m73 0h1m100 0h1m111 0h1m121 0h2m6 0h2m-418 1h2m73 0h1m330 0h2m6 0h2m-414 1h2m170 0h1m109 0h1m119 0h2m6 0h2m-426 1h1m88 0h1m332 0h2m-423 1h2m184 0h1m106 0h1m125 0h2m8 0h2m-429 1h2m86 0h1m326 0h2m8 0h2m-425 1h2m86 0h1m94 0h1m104 0h1m123 0h1m8 0h2m-430 1h1m8 0h2m415 0h2m-427 1h2m8 0h2m84 0h1m92 0h1m102 0h1m130 0h2m-423 1h3m7 0h1m85 0h1m322 0h2m-418 1h3m182 0h1m100 0h1m128 0h1m-424 1h2m9 0h2m90 0h1m-102 1h2m9 0h2m178 0h1m98 0h1m145 0h2m-436 1h2m99 0h1m330 0h2m-432 1h3m98 0h1m86 0h1m96 0h1m141 0h3m-438 1h2m9 0h2m380 0h1m38 0h3m6 0h2m-441 1h2m9 0h2m96 0h1m84 0h1m94 0h1m99 0h1m38 0h2m7 0h2m-437 1h3m106 0h1m275 0h1m39 0h1m7 0h2m-432 1h3m187 0h1m91 0h1m97 0h1m47 0h2m-427 1h2m103 0h1m269 0h1m47 0h2m8 0h2m-433 1h1m185 0h1m89 0h1m94 0h1m47 0h2m8 0h2m-326 1h1m263 0h1m48 0h1m7 0h3m-444 1h2m120 0h1m78 0h1m87 0h1m92 0h1m55 0h3m-439 1h2m376 0h1m55 0h2m9 0h2m-445 1h3m117 0h1m77 0h1m85 0h1m89 0h1m55 0h2m9 0h2m-440 1h3m116 0h1m249 0h1m65 0h3m-446 1h2m9 0h2m190 0h1m83 0h1m87 0h1m64 0h3m-441 1h2m9 0h2m114 0h1m243 0h1m64 0h2m-436 1h3m197 0h1m166 0h1m64 0h2m-431 1h3m121 0h1m237 0h1m-371 1h1m10 0h2m121 0h1m70 0h1m79 0h1m-285 1h3m9 0h2m353 0h1m83 0h1m-449 1h4m128 0h1m69 0h1m76 0h1m82 0h1m82 0h3m-444 1h3m127 0h1m225 0h1m80 0h4m-451 1h2m11 0h2m193 0h1m75 0h1m79 0h1m79 0h3m-445 1h3m137 0h1m219 0h1m79 0h2m11 0h2m-452 1h4m200 0h1m72 0h1m77 0h1m91 0h3m-446 1h3m132 0h1m213 0h1m89 0h4m-440 1h2m132 0h1m63 0h1m69 0h1m75 0h1m88 0h3m-94 1h1m88 0h2m11 0h2m-310 1h1m61 0h1m68 0h1m72 0h1m100 0h3m-306 1h1m199 0h1m98 0h4m-455 1h2m211 0h1m65 0h1m70 0h1m97 0h3m-449 1h3m149 0h1m193 0h1m97 0h2m11 0h2m-456 1h4m204 0h1m64 0h1m67 0h1m109 0h3m-450 1h3m144 0h1m187 0h1m107 0h4m-457 1h2m11 0h2m144 0h1m55 0h1m61 0h1m65 0h1m106 0h3m-451 1h3m336 0h1m106 0h2m-445 1h4m152 0h1m53 0h1m60 0h1m62 0h1m-331 1h3m325 0h1m-339 1h3m10 0h2m149 0h1m52 0h1m57 0h1m-273 1h4m159 0h1m167 0h1m127 0h3m-458 1h4m206 0h1m55 0h1m58 0h1m125 0h4m-451 1h3m154 0h1m161 0h1m123 0h4m-459 1h3m168 0h1m47 0h1m53 0h1m55 0h1m122 0h3m-452 1h4m320 0h1m136 0h3m-460 1h4m209 0h1m50 0h1m53 0h1m134 0h4m-453 1h3m309 0h1m132 0h4m-285 1h1m44 0h1m49 0h1m50 0h1m131 0h3m-279 1h1m141 0h1m145 0h3m-247 1h1m46 0h1m192 0h4m-286 1h1m137 0h1m139 0h4m-280 1h1m39 0h1m44 0h1m48 0h1m138 0h3m-458 1h3m311 0h1m152 0h2m-466 1h7m174 0h1m38 0h1m42 0h1m45 0h1m149 0h5m-457 1h3m297 0h1m147 0h4m-276 1h1m36 0h1m40 0h1m43 0h1m147 0h2m-459 1h4m185 0h1m117 0h1m-304 1h6m215 0h1m38 0h1m40 0h1m-296 1h4m177 0h1m111 0h1m-111 1h1m31 0h1m36 0h1m38 0h1m-303 1h4m296 0h1m-297 1h6m186 0h1m30 0h1m33 0h1m207 0h4m-463 1h4m282 0h1m166 0h6m-271 1h1m29 0h1m31 0h1m33 0h1m164 0h4m-464 1h4m197 0h1m91 0h1m-290 1h7m218 0h1m29 0h1m31 0h1m175 0h8m-464 1h3m189 0h1m85 0h1m171 0h6m-262 1h1m24 0h1m27 0h1m28 0h1m-3 1h1m-79 1h1m22 0h1m25 0h1m26 0h1m184 0h7m-194 1h1m179 0h7m-259 1h1m21 0h1m22 0h1m24 0h1m-280 1h6m205 0h1m65 0h1m-272 1h8m217 0h1m21 0h1m21 0h1m192 0h7m-262 1h1m59 0h1m187 0h7m-253 1h1m16 0h1m18 0h1m19 0h1m-272 1h6m263 0h1m-264 1h8m203 0h1m15 0h1m16 0h1m16 0h1m-49 2h1m13 0h1m14 0h1m16 0h1m-45 1h1m41 0h1m-265 1h15m220 0h1m12 0h1m13 0h1m207 0h7m-253 1h1m35 0h1m202 0h7m-244 1h1m8 0h1m10 0h1m11 0h1m-3 1h1m-257 1h14m214 0h1m7 0h1m7 0h1m9 0h1m-3 1h1m210 0h14m-247 1h1m5 0h1m6 0h1m6 0h1m-19 1h1m15 0h1m-12 1h1m3 0h1m4 0h1m-13 1h1m9 0h1m218 0h14m-241 1h2m4 0h1m-243 2h14m224 0h1m224 0h14m-243 2h1m4 0h2m-241 1h14m218 0h1m9 0h1m-13 1h1m4 0h1m3 0h1m-12 1h1m15 0h1m-19 1h1m6 0h1m6 0h1m5 0h1m-247 1h14m210 0h1m-3 1h1m9 0h1m7 0h1m7 0h1m214 0h14m-257 1h1m-3 1h1m11 0h1m10 0h1m8 0h1m-244 1h7m202 0h1m35 0h1m-252 1h6m207 0h1m13 0h1m12 0h1m220 0h14m-264 1h1m41 0h1m-45 1h1m16 0h1m14 0h1m13 0h1m-49 2h1m16 0h1m16 0h1m15 0h1m203 0h7m-263 1h1m262 0h7m-272 1h1m19 0h1m18 0h1m16 0h1m-254 1h8m187 0h1m59 0h1m-262 1h6m193 0h1m21 0h1m21 0h1m217 0h7m-271 1h1m65 0h1m204 0h7m-280 1h1m24 0h1m22 0h1m21 0h1m-259 1h7m179 0h1m-194 1h7m184 0h1m26 0h1m25 0h1m22 0h1m-79 1h1m-3 1h1m28 0h1m27 0h1m24 0h1m-263 1h8m170 0h1m85 0h1m188 0h4m-464 1h7m176 0h1m31 0h1m29 0h1m218 0h7m-290 1h1m91 0h1m197 0h3m-463 1h4m164 0h1m33 0h1m31 0h1m29 0h1m-271 1h6m166 0h1m282 0h4m-463 1h4m170 0h1m36 0h1m33 0h1m30 0h1m186 0h6m-297 1h1m296 0h4m-303 1h1m38 0h1m36 0h1m31 0h1m-111 1h1m111 0h1m177 0h4m-296 1h1m40 0h1m38 0h1m215 0h6m-304 1h1m117 0h1m185 0h4m-459 1h2m147 0h1m43 0h1m40 0h1m36 0h1m-277 1h5m147 0h1m297 0h3m-457 1h4m150 0h1m45 0h1m42 0h1m38 0h1m174 0h7m-466 1h2m152 0h1m311 0h3m-458 1h3m138 0h1m48 0h1m44 0h1m39 0h1m-280 1h4m139 0h1m137 0h1m-286 1h4m141 0h1m50 0h1m46 0h1m-246 1h2m287 0h1m-279 1h3m131 0h1m50 0h1m49 0h1m44 0h1m-285 1h4m132 0h1m309 0h3m-453 1h4m134 0h1m53 0h1m50 0h1m46 0h1m162 0h4m-460 1h3m136 0h1m320 0h4m-452 1h3m122 0h1m55 0h1m53 0h1m47 0h1m168 0h3m-459 1h4m123 0h1m161 0h1m154 0h3m-451 1h4m125 0h1m58 0h1m55 0h1m206 0h4m-458 1h3m127 0h1m167 0h1m159 0h4m-334 1h1m60 0h1m57 0h1m52 0h1m149 0h2m10 0h3m-339 1h1m325 0h3m-331 1h1m62 0h1m60 0h1m53 0h1m152 0h4m-445 1h2m106 0h1m336 0h3m-451 1h3m106 0h1m65 0h1m61 0h1m55 0h1m144 0h2m11 0h2m-457 1h4m107 0h1m187 0h1m144 0h3m-450 1h3m109 0h1m67 0h1m64 0h1m204 0h4m-456 1h2m11 0h2m97 0h1m193 0h1m149 0h3m-449 1h3m97 0h1m70 0h1m65 0h1m211 0h2m-455 1h4m98 0h1m199 0h1m-306 1h3m100 0h1m72 0h1m68 0h1m61 0h1m-310 1h2m11 0h2m88 0h1m-94 1h3m88 0h1m75 0h1m69 0h1m63 0h1m132 0h2m-440 1h4m89 0h1m213 0h1m132 0h3m-446 1h3m91 0h1m77 0h1m72 0h1m200 0h4m-452 1h2m11 0h2m79 0h1m219 0h1m137 0h3m-445 1h3m79 0h1m79 0h1m75 0h1m193 0h2m11 0h1m-450 1h4m80 0h1m225 0h1m127 0h3m-444 1h3m82 0h1m82 0h1m76 0h1m198 0h4m-449 1h1m83 0h1m353 0h2m9 0h3m-285 1h1m79 0h1m70 0h1m121 0h2m10 0h1m-371 1h1m237 0h1m121 0h3m-431 1h2m64 0h1m85 0h1m80 0h1m197 0h3m-436 1h2m64 0h1m243 0h1m114 0h2m9 0h2m-441 1h3m64 0h1m87 0h1m83 0h1m190 0h2m9 0h2m-446 1h3m65 0h1m249 0h1m116 0h3m-440 1h2m9 0h2m55 0h1m89 0h1m85 0h1m195 0h3m-445 1h2m9 0h2m55 0h1m376 0h2m-439 1h3m55 0h1m92 0h1m87 0h1m78 0h1m120 0h2m-444 1h3m6 0h2m48 0h1m263 0h1m-326 1h2m7 0h2m48 0h1m94 0h1m89 0h1m185 0h1m-432 1h1m7 0h2m48 0h1m269 0h1m103 0h2m-428 1h2m48 0h1m97 0h1m91 0h1m187 0h3m-433 1h2m8 0h1m39 0h1m275 0h1m106 0h3m-438 1h2m8 0h2m38 0h1m99 0h1m94 0h1m84 0h1m96 0h2m9 0h2m-441 1h1m7 0h3m38 0h1m380 0h2m9 0h2m-438 1h3m141 0h1m96 0h1m86 0h1m98 0h2m-431 1h2m330 0h1m98 0h3m-435 1h1m145 0h1m98 0h1m178 0h2m9 0h2m-102 1h1m90 0h2m9 0h2m-425 1h2m128 0h1m100 0h1m182 0h3m-419 1h2m323 0h1m85 0h1m7 0h3m-424 1h2m131 0h1m102 0h1m92 0h1m84 0h2m8 0h2m-428 1h2m416 0h2m8 0h1m-431 1h2m8 0h2m123 0h1m104 0h1m94 0h1m86 0h2m-426 1h2m8 0h2m327 0h1m86 0h2m-429 1h1m8 0h2m126 0h1m106 0h1m184 0h2m-424 1h2m333 0h1m88 0h1m-427 1h2m7 0h2m119 0h1m109 0h1m170 0h1m-414 1h2m7 0h2m330 0h1m72 0h2m-417 1h1m7 0h2m121 0h1m111 0h1m100 0h1m72 0h2m-413 1h2m6 0h2m403 0h2m-417 1h2m6 0h2m116 0h1m113 0h1m101 0h1m65 0h1m8 0h2m-421 1h2m6 0h2m336 0h1m64 0h2m8 0h2m-417 1h2m118 0h1m115 0h1m170 0h2m8 0h2m-421 1h2m342 0h1m66 0h2m-415 1h2m121 0h1m117 0h1m165 0h2m6 0h2m-69 1h1m60 0h2m6 0h2m-404 1h1m105 0h1m119 0h1m108 0h1m60 0h1m7 0h2m-408 1h2m302 0h1m86 0h1m7 0h2m-403 1h2m106 0h1m122 0h1m75 0h1m33 0h1m52 0h2m7 0h2m-407 1h2m6 0h1m301 0h1m34 0h1m52 0h2m7 0h2m-410 1h1m6 0h2m101 0h1m123 0h1m77 0h1m88 0h2m7 0h1m-413 1h2m5 0h2m341 0h1m54 0h2m-409 1h2m5 0h2m103 0h1m126 0h1m169 0h2m-405 1h1m8 0h1m302 0h1m35 0h1m41 0h1m14 0h2m-409 1h2m7 0h2m96 0h1m128 0h1m78 0h1m36 0h1m40 0h2m-397 1h2m8 0h1m307 0h1m78 0h1m-390 1h2m5 0h1m91 0h1m130 0h1m80 0h1m78 0h2m-394 1h2m5 0h2m377 0h1m7 0h1m-396 1h1m6 0h1m92 0h1m133 0h1m153 0h2m6 0h2m-400 1h2m5 0h2m383 0h2m6 0h1m-402 1h1m5 0h2m94 0h1m134 0h1m150 0h1m6 0h1m6 0h2m-399 1h1m383 0h2m5 0h2m-395 1h2m13 0h1m81 0h1m137 0h1m152 0h1m6 0h2m-398 1h1m13 0h2m368 0h1m5 0h1m7 0h2m-387 1h1m83 0h1m138 0h1m148 0h2m4 0h2m-382 1h2m374 0h1m5 0h1m-384 1h1m7 0h1m76 0h1m141 0h1m150 0h1m5 0h1m-387 1h2m6 0h2m371 0h2m4 0h2m-390 1h1m7 0h1m78 0h1m142 0h1m153 0h1m-387 1h2m7 0h1m5 0h1m358 0h1m12 0h1m-381 1h2m4 0h2m72 0h1m145 0h1m141 0h1m12 0h2m-384 1h1m5 0h1m363 0h2m-373 1h1m5 0h1m6 0h1m66 0h1m148 0h1m143 0h1m-376 1h2m4 0h2m5 0h2m354 0h1m6 0h1m-372 1h1m6 0h1m68 0h1m149 0h1m138 0h2m5 0h1m-374 1h1m6 0h1m360 0h1m5 0h1m-377 1h2m5 0h2m68 0h1m152 0h1m133 0h1m6 0h1m5 0h2m-373 1h1m358 0h2m5 0h2m5 0h1m-375 1h1m12 0h1m57 0h1m153 0h1m136 0h1m6 0h1m-372 1h2m12 0h1m344 0h1m5 0h1m6 0h1m-374 1h1m12 0h2m57 0h1m156 0h1m131 0h1m5 0h2m5 0h2m-364 1h1m5 0h1m343 0h2m5 0h1m-359 1h1m5 0h1m52 0h1m158 0h1m134 0h1m5 0h1m-361 1h1m5 0h1m348 0h1m5 0h2m-364 1h1m5 0h1m5 0h1m47 0h1m160 0h1m135 0h1m-360 1h2m4 0h2m5 0h1m334 0h1m11 0h2m-363 1h1m5 0h1m6 0h1m210 0h1m125 0h1m12 0h1m-359 1h1m6 0h1m4 0h1m328 0h1m4 0h1m12 0h1m-361 1h1m5 0h2m4 0h1m208 0h1m121 0h1m4 0h1m-350 1h1m5 0h1m5 0h1m332 0h1m4 0h1m-346 1h1m5 0h1m211 0h1m116 0h1m5 0h1m4 0h2m-349 1h1m4 0h2m330 0h1m5 0h1m5 0h1m-351 1h1m4 0h1m11 0h1m202 0h1m118 0h1m5 0h1m5 0h1m-353 1h1m4 0h1m11 0h1m317 0h1m5 0h1m5 0h1m5 0h1m-350 1h1m11 0h1m205 0h1m113 0h1m5 0h1m5 0h1m-346 1h1m11 0h1m5 0h1m315 0h1m5 0h1m5 0h1m-336 1h1m5 0h1m201 0h1m115 0h1m5 0h1m5 0h1m-338 1h1m5 0h1m319 0h1m5 0h1m-334 1h1m5 0h1m5 0h1m198 0h1m116 0h1m5 0h1m-336 1h1m5 0h1m5 0h1m306 0h1m10 0h1m5 0h1m-338 1h1m5 0h1m5 0h1m200 0h1m107 0h1m10 0h1m5 0h1m-340 1h1m5 0h1m5 0h1m4 0h1m300 0h1m4 0h1m10 0h1m-336 1h1m5 0h1m5 0h1m4 0h1m198 0h1m103 0h1m4 0h1m10 0h1m-332 1h1m5 0h1m4 0h1m304 0h1m4 0h1m10 0h1m-334 1h1m5 0h1m4 0h1m201 0h1m98 0h1m5 0h1m-320 1h1m5 0h1m4 0h1m302 0h1m5 0h1m-316 1h1m15 0h1m192 0h1m95 0h1m4 0h1m9 0h1m-322 1h1m15 0h1m290 0h1m4 0h1m9 0h1m-324 1h1m5 0h1m14 0h1m190 0h1m101 0h1m4 0h1m4 0h1m-320 1h1m314 0h1m-317 1h1m10 0h1m196 0h1m97 0h1m10 0h1m-308 1h1m4 0h1m4 0h1m276 0h1m9 0h1m4 0h1m5 0h1m-310 1h1m4 0h1m194 0h1m98 0h1m4 0h1m-290 1h1m284 0h1m4 0h1m-297 1h1m4 0h1m185 0h1m84 0h1m4 0h1m-293 1h1m4 0h1m4 0h1m282 0h1m-295 1h1m4 0h1m198 0h1m80 0h1m19 0h1m-291 1h1m274 0h1m-282 1h1m4 0h1m9 0h1m179 0h1m76 0h1m9 0h1m4 0h1m-294 1h1m4 0h1m4 0h1m273 0h1m9 0h1m-286 1h1m14 0h1m177 0h1m82 0h1m-267 1h1m260 0h1m9 0h1m-273 1h1m8 0h1m263 0h1m4 0h1m-290 1h1m14 0h1m249 0h1m14 0h1m-267 1h1m9 0h1m250 0h1m5 0h1m-273 1h1m252 0h1m-255 1h1m258 0h1m-256 1h1m4 0h1m4 0h1m235 0h1m18 0h1m-267 1h1m18 0h1m233 0h1m-10 1h1m-236 1h1m249 1h1m-234 1h1m223 0h1m-244 1h1m229 0h1m18 0h1m-227 1h1m216 0h1m13 0h1m-242 1h1m209 1h1m27 0h1m-222 2h1m188 0h1m-211 4h1m202 0h1m-172 1h1m166 0h1m27 1h1m-213 5h1m3 2h1m188 2h1m-8 3h1m-160 4h1m146 0h1"/>
<path transform="translate(.5 0)" stroke="#7f7f7f" d="m142 129v2m1 340v2m2-346v2m3-11v2m0 4v2m0 352v2m2 2v2m2-11v2m1-351v2m0 352v2m0 5v2m1-375v2m2 360v2m0 5v2m1-374v2m0 5v2m0 368v2m2-11v2m1-372v2m0 4v2m0 5v2m2 358v2m1-371v2m0 4v2m0 373v2m1-390v2m2 1v2m0 6v2m0 371v2m0 4v2m2-386v2m1 372v2m0 4v2m1-379v2m0 382v2m1-399v2m0 393v2m1-11v2m0 5v2m1-392v2m0 394v2m1-403v2m0 5v2m0 383v2m1-4v2m0 6v2m1-397v2m0 5v2m1-7v2m0 388v2m1-400v2m1 0v2m0 7v2m0 382v2m1 12v2m1-413v2m0 5v2m0 400v2m1-409v2m0 5v2m0 396v2m1-398v2m0 392v2m1-402v2m0 396v2m0 7v2m1-407v2m0 392v2m0 7v2m1-403v2m0 397v2m1 5v2m1-12v2m0 6v2m1-419v2m0 405v2m0 6v2m1-415v2m0 409v2m1-411v2m0 405v2m0 8v2m1-425v2m0 6v2m0 401v2m0 8v2m1-421v2m0 6v2m0 407v2m1-417v2m0 6v2m0 403v2m1-413v2m0 407v2m1-418v2m0 7v2m0 403v2m1-414v2m0 7v2m1-9v2m1 0v2m0 418v2m1-430v2m0 8v2m0 414v2m1-426v2m0 8v2m0 410v2m1-422v2m0 416v2m1-418v2m0 412v2m0 8v2m1-424v2m0 417v3m1-420v2m0 412v3m1-5v2m0 9v2m1-440v2m0 423v2m0 9v2m1-436v2m0 429v3m1-432v3m0 424v2m1-426v3m0 419v2m0 9v2m1-442v2m0 8v2m0 415v2m0 9v2m1-438v2m0 431v3m1-434v2m0 426v3m1-438v2m0 7v2m0 422v2m1-433v2m0 7v2m1-9v3m0 6v2m1-8v3m0 436v2m1-449v2m0 9v2m0 432v2m1-445v2m0 9v2m0 427v3m1-441v3m0 432v3m1-435v3m0 427v2m0 9v2m1-440v2m0 423v2m0 9v2m1-436v2m0 429v3m1-6v3m1-5v2m1-4v2m0 9v3m1-451v3m0 441v4m1-445v4m0 434v3m1-437v3m0 429v2m0 11v2m1-457v2m0 11v2m0 437v3m1-453v3m0 443v4m1-447v4m0 436v3m1-439v3m0 431v2m1-446v2m0 11v2m1-13v3m1 0v4m1 0v3m0 446v2m1-461v2m0 11v2m0 441v3m1-457v3m0 447v4m1-451v4m0 440v3m1-443v3m0 435v2m0 11v2m1-450v2m0 443v3m1-7v4m1-7v3m1-5v2m0 10v3m1-465v3m0 455v4m1-459v4m0 447v4m1-451v4m0 440v3m1-443v3m0 449v3m1-467v3m0 457v4m1-461v4m0 449v4m1-453v4m0 442v3m1-445v3m1-15v3m1 0v4m1 0v4m1 0v3m1-14v2m0 464v3m1-467v4m0 453v7m1-460v5m0 445v3m1-448v2m1 453v4m1-10v6m1-10v4m2 7v4m1-473v4m0 459v6m1-465v6m0 449v4m1-453v4m1 456v4m1-475v7m0 457v7m1-464v7m0 447v3m3-464v7m1 0v7m1 386v4m1-10v6m0 68v7m1-475v6m0 385v3m0 67v7m1-462v8m2 454v7m1-14v7m4-469v7m0 455v15m1-470v7m3 449v14m1-477v14m4-14v14m1 225v2m2-241v14m0 449v14m2-241v2m1 225v14m4-14v14m1-477v14m3 449v7m1-469v14m0 455v6m4-469v8m1-14v6m2 455v7m1-462v8m0 454v7m1-475v6m2 455v7m1 0v7m3-464v4m0 445v7m1-463v7m0 456v8m1-474v3m1 456v4m1-453v4m0 449v6m1-465v6m0 459v4m1-473v4m2 7v4m1-10v6m1-10v4m1 453v2m1-448v3m0 445v4m1-459v7m0 452v5m1-467v3m0 464v2m1-14v3m1 0v4m1 0v4m1 0v2m1-14v3m1-445v3m0 442v4m1-453v4m0 449v4m1-461v4m0 457v3m1-467v3m0 449v3m1-443v3m0 440v4m1-451v4m0 447v4m1-459v4m0 455v3m1-465v3m0 10v2m1-5v3m1-7v4m1-7v3m0 443v2m1-450v2m0 11v2m0 435v3m1-443v3m0 440v4m1-451v4m0 447v3m1-457v3m0 441v2m0 11v2m1-461v2m0 446v3m1 0v4m1 0v3m1-13v2m0 11v2m1-446v2m0 431v3m1-439v3m0 436v4m1-447v4m0 443v3m1-453v3m0 437v2m0 11v2m1-444v2m0 429v3m1-437v3m0 434v4m1-445v4m0 441v3m1-451v3m0 9v2m1-4v2m1-5v3m1-6v3m0 429v2m1-436v2m0 9v2m0 423v2m1-440v2m0 9v2m0 427v3m1-435v3m0 432v3m1-441v3m0 81v2m0 344v2m0 9v2m1-445v2m0 82v2m0 348v2m0 9v2m1-449v2m0 436v3m1-358v2m0 356v3m1-363v2m0 351v2m0 8v2m1-433v2m0 421v2m1-428v3m0 425v2m1-433v3m0 430v2m1-437v2m0 9v2m0 415v2m0 7v2m1-441v2m0 9v2m0 419v3m0 6v2m1-435v3m0 424v3m1-432v2m0 430v2m1-436v2m0 9v2m1-15v2m0 9v2m1-5v3m1-6v3m0 416v2m1-423v2m0 8v2m0 411v2m1-417v2m0 415v2m1-421v2m0 419v2m1-425v2m0 413v2m0 8v2m1-429v2m0 417v2m0 8v2m1-10v2m1-410v2m0 400v2m0 6v2m1-414v2m0 404v2m0 6v2m1-418v2m0 408v2m0 6v2m1-422v2m0 412v2m1-418v2m0 8v2m0 397v2m0 7v2m1-422v2m0 8v2m0 401v2m0 7v2m1-416v2m0 405v2m1-411v2m0 409v2m1-415v2m0 7v2m0 404v2m1-419v2m0 7v2m0 315v2m1-321v2m1 5v2m0 389v2m1-403v2m0 6v2m0 393v2m1-407v2m0 6v2m1-4v2m0 393v2m0 5v2m1-406v2m0 397v2m0 5v2m1-410v2m0 408v2m1-8v2m1-393v2m0 382v2m0 7v2m1 0v2m1-400v2m0 388v2m1-7v2m0 5v2m1-397v2m0 6v2m1-4v2m0 383v2m0 5v2m1-403v2m0 5v2m0 387v2m1-385v2m1-11v2m0 393v2m1-399v2m0 382v2m1-379v2m0 4v2m1 372v2m2-386v2m0 4v2m0 371v2m0 6v2m2 1v2m1-390v2m0 373v2m0 4v2m1-371v2m2 358v2m0 5v2m0 4v2m1-372v2m2-11v2m0 368v2m0 5v2m1-374v2m0 5v2m2 360v2m1-375v2m0 5v2m0 352v2m1-351v2m2-11v2m2 2v2m0 358v2m1-7v2m3-349v2m0 342v2m3-4v2"/>
<path transform="translate(0 .5)" stroke="#ff0000" d="m745 106h1m5 0h1m-6 1h1m3 0h1m-4 1h3m-4 1h1m3 0h1m-5 4h1m3 0h1m-476 1h1m471 0h3m-476 1h1m-11 1h2m0 1h1m104 10h5m-113 1h15m91 0h2m5 0h2m-10 1h1m9 0h1m-12 1h1m11 0h1m-7 5h1m-293 2h3m7 0h3m-14 1h1m3 0h1m5 0h1m3 0h1m272 2h1m11 0h1m-12 1h1m9 0h1m-299 1h1m13 0h1m274 0h2m5 0h2m-297 1h1m11 0h1m277 0h5m368 3h1m1 0h1m1 0h1m1 2h1m-476 3h1m474 2h1m-2 1h1m1 0h1m-463 2h1m-4 3h1m66 0h1m-71 3h1m-3 3h1m-4 3h1m-4 3h1m-4 3h1m-4 3h1m-3 3h1m-4 3h1m278 2h5m-287 1h1m284 0h1m203 0h2m-207 1h1m198 0h1m3 0h2m-206 1h1m-287 1h1m284 0h1m206 0h2m-210 1h1m-10 1h1m7 0h1m-287 1h1m278 0h1m5 0h1m-6 1h1m3 0h1m-4 1h1m1 0h1m212 0h1m-500 1h1m284 0h1m-139 1h1m136 0h1m1 0h1m-4 1h1m3 0h1m-290 1h1m148 0h1m134 0h1m5 0h1m-8 1h1m7 0h1m-143 1h1m132 0h1m-286 1h1m283 0h1m-133 1h1m-156 2h1m154 0h1m-1 2h1m-159 1h1m157 1h1m-162 2h1m160 0h1m-1 2h1m-164 1h1m162 1h1m-167 2h1m165 0h1m-1 2h1m-170 1h1m168 1h1m-173 2h1m171 0h1m-1 2h1m-176 1h1m174 1h1m-178 2h1m176 0h1m-1 2h1m-181 1h1m179 1h1m-184 2h1m182 0h1m-1 2h1m347 0h3m-537 1h1m531 0h2m3 0h2m-353 1h1m-190 2h1m188 0h1m348 0h1m-350 2h1m-193 1h1m537 0h2m3 0h2m-353 1h1m347 0h3m-545 2h1m193 0h1m-1 2h1m-198 1h1m196 1h1m-201 2h1m199 0h1m-1 2h1m-204 1h1m202 1h1m-207 2h1m205 0h1m-1 2h1m-209 1h1m207 1h1m-212 2h1m210 0h1m-1 2h1m-215 1h1m213 1h1m-218 2h1m216 0h1m-1 2h1m-221 1h1m219 1h1m-223 2h1m221 0h1m350 0h3m-2 1h1m-353 1h1m350 0h1m-577 1h1m571 0h2m1 0h1m-351 1h1m345 0h1m2 0h1m-578 2h1m227 0h1m345 1h1m2 0h1m-350 1h1m346 0h2m-580 1h1m230 1h1m351 0h1m-7 1h2m-582 1h1m233 0h1m-1 2h1m-238 1h1m236 1h1m345 1h8m-593 1h1m238 0h1m-1 2h1m-243 1h1m241 1h1m-251 1h1m248 1h1m-1 2h1m-1 2h1m-1 2h1m-1 2h1m-1 2h1m-1 2h1m-1 2h1m-1 2h1m-1 2h1m-1 2h1m-1 2h1m-1 2h1m-1 2h1m-1 2h1m-1 2h1m-1 2h1m-1 2h1m-1 2h1m-1 2h1m-1 2h1m-1 2h1m-1 2h1m-1 2h1m-1 2h1m-1 2h1m-1 2h1m-1 2h1m-1 2h1m-1 2h1m-1 2h1m-1 2h1m-1 2h1m-1 2h1m-1 2h1m-1 2h1m-1 2h1m-1 2h1m-1 2h1m-1 2h1m-1 2h1m-1 2h1m-1 2h1m-119 63h1m-2 22h6m-2 1h1m-2 1h1m-2 1h1m-2 1h1m-2 1h1m-9 1h5m2 0h1m-9 1h1m5 0h2m-9 1h1m-1 6h1m7 0h1m-8 1h1m5 0h1m-6 1h5m-7 67h5m-6 1h1m5 0h1m-8 1h1m7 0h1m-10 1h1m9 0h1m-11 6h1m9 0h1m-14 3h1m0 1h1m1 0h1m9 0h1m-12 1h1m11 0h1m0 1h1m0 1h1"/>
<path transform="translate(.5 0)" stroke="#ff0000" d="m79 139v3m6-3v3m1 0v4m1 0v8m1-12v4m1-7v3m6-3v3m168-15v1m1-3v2m1-4v2m0 431v5m1-440v2m1-5v3m0 441v3m1-87v5m5-367v12m0 1v2m2 431v3m2-88v1m0 78v5m1-83v5m6-13v5m81-342v5m1-7v2m0 5v2m14-9v2m0 5v2m1-7v5m17 248v15m1-48v34m1-68v34m1-67v33m1-67v34m1-68v34m1-50v16m143-32v4m197 49v3m0 39v2m1-173v3m0 34v7m0 32v5m0 47v1m0 3v1m0 49v1m1-102v3m0 96v2m1-145v7m0 34v3m0 97v2m1-104v1m1-40v6m0 35v1m0 92v2m1 4v6m0 1v1m1-185v3m0 34v6m0 37v1m0 47v1m0 3v1m1-56v2m0 2v3m0 45v3m0 35v2"/>
<path transform="translate(0 .5)" stroke="#00ff00" d="m335 30h1m-14 1h2m4 0h2m-9 2h1m5 0h1m5 0h1m-9 2h2m4 0h2m-14 1h1m15 4h1m-14 1h2m4 0h2m-9 2h1m5 0h1m5 0h1m-9 2h2m4 0h2m-14 1h1m33 74h5m-6 1h1m5 0h1m-7 6h1m5 0h1m388 0h3m-397 1h2m1 0h2m387 0h2m3 0h2m-8 1h1m0 1h2m3 1h2m-401 1h9m392 0h1m-8 1h2m3 0h2m-5 1h3m-558 9h1m11 0h1m-12 1h1m9 0h1m-10 5h9m-10 3h1m9 0h1m-12 1h1m11 0h1m-8 2h1m1 0h1m148 3h1m67 0h1m7 0h1m-228 1h3m132 0h1m84 0h1m5 0h1m-6 1h5m-90 1h1m83 0h1m5 0h1m-91 2h1m0 2h1m409 1h1m1 0h1m1 0h1m-402 1h1m69 0h1m5 0h1m-73 1h1m66 0h2m1 0h2m-88 1h1m11 0h1m-13 2h1m12 0h1m2 0h1m64 1h9m-206 1h1m116 0h1m11 0h1m3 1h1m397 0h2m-416 1h1m12 0h1m22 0h1m-3 1h2m-35 1h1m11 0h1m2 0h1m15 0h2m-4 1h2m-31 1h1m11 0h1m15 0h1m-13 1h1m9 0h2m-27 1h1m11 0h1m10 0h2m-4 1h2m-23 1h1m11 0h1m3 0h1m3 0h1m-3 1h2m-19 1h1m11 0h1m2 0h2m-4 1h3m-15 1h1m10 0h1m-3 1h2m-11 1h1m6 0h2m3 0h1m2 0h1m-11 1h2m-6 1h1m2 0h1m7 0h1m-11 1h2m11 0h1m47 0h1m-64 1h2m11 0h1m-16 1h2m-3 1h1m4 0h1m10 0h1m2 0h1m-22 1h2m-4 1h2m7 0h1m10 0h1m-23 1h2m24 0h1m-28 1h1m12 0h1m10 0h1m-27 1h2m-4 1h2m15 0h1m10 0h1m2 0h1m-34 1h2m-3 1h1m20 0h1m10 0h1m-35 1h2m35 0h1m-40 1h2m23 0h1m10 0h1m-39 1h2m425 0h1m7 0h1m-437 1h1m28 0h1m10 0h1m1 0h1m386 0h1m5 0h1m-438 1h2m-4 1h2m32 0h1m9 0h1m-47 1h2m47 0h1m384 0h9m-444 1h1m36 0h1m9 0h1m-50 1h2m-4 1h2m40 0h1m9 0h1m2 0h1m384 0h1m5 0h1m-449 1h2m439 0h1m7 0h1m-451 1h1m44 0h1m9 0h1m-58 1h2m58 0h1m-63 1h2m48 0h1m9 0h1m-63 1h2m-3 1h1m52 0h1m9 0h1m2 0h1m-69 1h2m-4 1h2m56 0h1m9 0h1m-71 1h2m70 0h1m-74 1h1m60 0h1m9 0h1m-74 1h2m-4 1h2m64 0h1m8 0h1m2 0h1m-81 1h2m-3 1h1m68 0h1m9 0h1m-82 1h2m82 0h1m-87 1h2m72 0h1m8 0h1m-86 1h2m-3 1h1m76 0h1m9 0h1m1 0h1m-92 1h2m-4 1h2m80 0h1m8 0h1m-94 1h2m94 0h1m-98 1h1m85 0h1m8 0h1m-98 1h2m-4 1h2m88 0h1m8 0h1m2 0h1m-105 1h2m-3 1h1m93 0h1m7 0h1m-105 1h2m105 0h1m-110 1h2m96 0h1m8 0h1m-110 1h2m-3 1h1m101 0h1m7 0h1m2 0h1m-116 1h2m-4 1h2m104 0h1m8 0h1m-118 1h2m117 0h1m-121 1h1m109 0h1m7 0h1m-121 1h2m-4 1h2m112 0h1m8 0h1m1 0h1m-128 1h2m-3 1h1m117 0h1m7 0h1m-129 1h2m129 0h1m-134 1h2m120 0h1m8 0h1m-134 1h2m-3 1h1m125 0h1m7 0h1m1 0h1m-139 1h2m514 0h1m3 0h1m-523 1h2m129 0h1m6 0h1m380 0h3m-524 1h2m141 0h1m-145 1h1m133 0h1m7 0h1m-145 1h2m-4 1h2m137 0h1m6 0h1m1 0h1m377 0h1m1 0h1m-531 1h2m-3 1h1m141 0h1m7 0h1m377 0h5m-535 1h2m152 0h1m-157 1h2m145 0h1m6 0h1m-157 1h2m533 0h3m-539 1h1m149 0h1m7 0h1m1 0h1m-163 1h2m-4 1h2m153 0h1m6 0h1m-165 1h2m164 0h1m375 0h1m1 0h1m-546 1h1m157 0h1m6 0h1m-168 1h2m542 0h5m-551 1h2m161 0h1m6 0h1m1 0h1m-175 1h2m-3 1h1m165 0h1m6 0h1m-176 1h2m175 0h1m-180 1h2m169 0h1m6 0h1m-181 1h2m-3 1h1m173 0h1m6 0h1m1 0h1m-186 1h2m-4 1h2m177 0h1m6 0h1m-189 1h2m188 0h1m-192 1h1m182 0h1m5 0h1m-192 1h2m-4 1h2m185 0h1m5 0h1m1 0h1m-198 1h2m-3 1h1m190 0h1m5 0h1m-200 1h2m199 0h1m-204 1h2m193 0h1m5 0h1m-204 1h2m-3 1h1m198 0h1m5 0h2m-209 1h2m-4 1h2m201 0h1m5 0h1m-212 1h2m211 0h1m-215 1h1m206 0h1m5 0h1m-216 1h2m-4 1h2m209 0h1m5 0h1m1 0h1m-222 1h2m-3 1h1m214 0h1m4 0h1m1 1h1m-8 1h1m5 0h1m-6 2h1m4 0h1m1 0h1m-8 2h1m5 0h1m0 1h1m366 0h1m5 0h1m-380 1h1m4 0h1m-5 2h1m4 0h2m366 0h5m-378 2h1m4 0h1m366 0h1m5 0h1m-372 1h1m366 0h1m1 0h1m-376 1h1m4 0h1m368 1h1m-375 1h1m4 0h2m-6 2h1m3 0h1m1 1h1m-7 1h1m4 0h1m-5 2h1m3 0h2m-6 2h1m4 0h1m0 1h1m-6 1h1m3 0h1m-5 2h1m4 0h2m-6 2h1m3 0h1m0 1h1m-5 1h1m2 0h1m-4 2h1m3 0h2m-5 2h1m2 0h1m-4 2h1m0 2h1m2 0h2m-5 2h1m3 0h1m0 1h1m-5 1h1m2 0h1m-4 2h1m2 0h2m-4 2h1m2 0h1m0 1h1m-5 1h1m2 0h1m-3 2h1m2 0h2m-5 2h1m2 0h1m-3 2h1m0 2h1m1 0h2m-4 2h1m1 0h1m-2 2h1m-1 2h1m1 0h2m-3 2h1m1 0h1m0 1h1m-4 1h1m1 0h1m-2 2h1m1 0h1m-3 2h1m1 0h1m-2 2h1m-1 2h1m1 0h1m-2 2h2m-1 2h2m-2 2h3m-2 2h1m-1 2h1m0 2h2m-2 2h1m0 4h2m-1 2h1m-344 2h1m13 0h1m328 0h2m-344 1h1m11 0h1m-12 1h2m1 0h5m1 0h2m331 0h1m-1 2h1m-343 10h2m1 0h5m1 0h2m-12 1h1m11 0h1m-14 1h1m13 0h1m441 36h5m-6 1h1m5 0h1m-12 5h7m3 0h7m-17 4h17"/>
<path transform="translate(.5 0)" stroke="#00ff00" d="m57 399v13m6-13v13m131-267v4m0 1v2m2 4v3m2-12v2m0 1v6m2 0v3m2-14v4m0 1v2m118-118v2m0 8v2m2-14v1m0 9v1m1-13v1m0 9v1m1-9v3m0 7v3m1-9v1m0 9v1m1-13v1m0 9v1m2-13v1m0 9v1m1-13v1m0 9v1m1-9v3m0 7v3m1-9v1m0 9v1m1-13v1m0 9v1m2-14v2m0 8v2m17 79v5m4 1v4m0 1v4m4-15v5m25 209v2m4 16v2m1 4v2m3 10v2m1 4v1m1 4v3m1 3v3m2 4v1m1 4v3m18-242v5m4 1v4m0 1v2m4-13v5m83 284v3m1 0v1m6-1v1m1-4v3m229-323v2m1 34v7m1 34v2m0 1v2m0 45v3m0 6v3m0 37v2m0 1v1m1-180v2m0 34v7m0 139v1m1-53v2m0 1v1m0 5v2m0 1v2m0 33v1m0 1v3m1-184v2m0 36v7m0 139v1m1-106v2m0 1v2m0 45v3m0 6v3m0 37v2m0 1v1m2-182v2m0 41v2"/>
<path transform="translate(0 .5)" stroke="#ffff00" d="m457 79h3m-14 1h1m7 0h1m1 0h1m3 0h1m-16 1h1m9 0h1m-4 1h1m1 0h1m0 1h1m0 1h1m3 0h1m-4 1h3m-1 2h1m-12 1h1m1 0h1m9 0h1m-1 6h1m-2 1h1m285 21h1m6 0h1m-7 1h1m1 0h2m1 0h1m-6 6h1m1 0h2m1 0h1m-7 1h1m6 0h1m-419 29h1m-50 3h1m2 0h1m-13 1h1m2 0h1m2 0h1m464 1h3m-416 2h1m2 0h1m0 1h1m1 0h1m403 0h4m1 0h4m-411 1h2m400 1h9m-407 1h3m0 1h1m-127 12h1m528 19h1m-8 1h2m1 0h2m-349 1h1m345 0h2m1 0h2m-8 1h1m-342 1h1m348 1h1m-8 1h2m1 0h2m-3 1h2m1 0h2m-8 1h1m-713 59h1m11 0h1m-11 3h2m5 0h2m-7 1h5m-7 1h2m5 0h2m-9 10h2m5 0h2m-7 1h5m704 18h2m1 0h2m-1 2h2m-3 1h1m2 4h1m-350 104h1m13 15h4m1 0h4m-1 4h3m-4 1h1m3 0h1m-7 1h2m4 3h1m-1 4h1m0 1h1m-32 94h1m3 0h1m3 0h1m-8 1h1m1 0h1m1 0h1m1 0h1m1 0h1m3 2h1m-2 1h1m-2 1h1m-1 8h1m1 0h1m-2 1h1m-2 1h1m1 0h1m-4 1h1m3 0h1"/>
<path transform="translate(.5 0)" stroke="#ffff00" d="m32 271v5m1-12v2m0 3v2m0 5v2m10-14v2m0 3v2m0 5v2m1-7v5m302-113v1m53 369v13m4-13v13m4-13v11m4-11v11m9-123v15m6-3v3m2-7v3m19-353v9m2 1v5m2-11v5m2-9v3m5 4v1m3-6v3m0 5v5m284 104v1m0 4v1m1-45v2m0 35v1m0 4v1m1-85v7m0 75v1m0 4v1m0 91v8m2-108v1m0 4v1m1-85v7m0 35v2m0 38v1m0 4v1m0 97v2m1-107v1m0 4v1m0 97v2"/>
<path transform="translate(0 .5)" stroke="#0000ff" d="m185 51h1m15 0h1m-16 1h1m13 0h1m-14 1h1m11 0h1m-15 6h17m-15 6h1m11 0h1m-14 1h1m13 0h1m-16 1h1m15 0h1m78 47h1m1 0h1m2 0h2m1 0h2m2 0h1m1 0h1m-12 5h2m5 0h2m-7 1h2m1 0h2m-7 4h4m1 0h4m-82 9h5m-6 1h1m5 0h2m-9 1h1m8 0h1m-9 1h1m8 0h1m528 0h3m-540 1h1m535 0h1m3 0h1m-7 5h1m0 1h1m5 0h1m0 1h1m-543 1h1m-2 1h1m8 0h1m-11 1h1m8 0h1m-9 1h1m5 0h2m-7 1h5m74 1h1m142 21h3m-215 1h1m211 3h3m315 1h3m-2 1h1m-323 1h2m5 0h2m312 0h1m-320 1h2m1 0h2m309 0h1m3 0h1m-4 1h1m1 0h1m-2 1h1m-2 1h1m1 0h1m-320 1h9m307 0h1m3 0h1m-6 1h1m-336 13h1m335 19h2m3 0h2m-7 3h1m5 0h1m-6 27h3m-4 1h1m3 0h2m-5 1h1m-1 4h1m-2 1h1m3 0h2m-5 1h3m-5 63h1m2 0h1m1 0h1m2 0h1m-201 2h1m3 0h1m3 0h1m185 0h1m3 0h1m-198 1h1m1 0h1m1 0h1m1 0h1m1 0h1m185 0h1m1 0h1m-4 2h2m1 0h2m-3 4h1m-2 1h1m1 0h1m-2 1h1m-3 1h1m3 0h1m-4 1h1m1 0h1m-184 1h1m1 0h1m177 1h5m-188 2h1m2 0h1m-3 1h2m-423 169h5m-8 1h3m5 0h1m-10 1h1m9 0h3m-14 1h1m9 0h1m3 0h1m-16 1h1m1 2h3m-4 1h1m3 0h1m5 0h1m3 0h1m-4 1h3m1 2h1m-16 1h1m3 0h1m9 0h1m-14 1h3m9 0h1m-10 1h1m5 0h3m-8 1h5"/>
<path transform="translate(.5 0)" stroke="#0000ff" d="m137 512v3m6-3v3m4-7v3m6-3v3m35-457v2m0 7v2m1-9v3m0 1v3m8-7v3m0 1v3m1-9v2m0 7v2m13 73v2m0 3v2m1-5v3m7-6v2m0 5v2m1-7v5m61-32v5m1 0v2m5-7v17m5-12v2m1-7v5m134 54v5m1 0v2m3-6v3m2 4v4m0 1v4m2-16v3m3 1v2m1-7v5m115 145v13m4-13v13m4-13v13m5-4v4m177-117v2m1-81v3m0 175v3m0 7v3m1-188v2m1 74v3m0 29v3m1-32v5m0 91v9m0 5v2m0 1v2m1-118v3m1-79v2m0 105v1m0 3v1m1-115v3m0 108v3m0 64v3m0 7v3m1-152v2m0 38v2"/>
<path transform="translate(0 .5)" stroke="#00ffff" d="m278 158h1m1 0h1m1 1h1m1 1h1m1 0h1m1 1h1m1 1h1m1 1h1m1 0h1m1 1h1m1 1h1m1 0h1m45 0h1m3 0h1m-49 1h1m35 0h1m3 0h1m-39 1h1m1 0h1m19 0h1m3 0h1m3 0h1m-27 1h1m9 0h1m3 0h1m-17 1h1m3 0h1m1 0h1m-15 1h1m3 0h1m-17 1h1m3 0h1m25 0h1m1 0h1m-41 1h1m41 0h1m-51 1h1m51 0h1m-65 1h1m65 0h1m1 0h1m1 1h1m-91 1h1m91 0h1m1 0h1m1 1h1m-113 1h1m113 0h1m1 0h1m1 1h1m1 1h1m1 0h1m1 1h1m1 1h1m1 0h1m1 1h1m1 1h1m1 1h1m1 0h1m1 1h1m1 1h1m1 0h1m1 1h1m1 1h1m1 0h1m1 1h1m1 1h1m1 0h1m1 1h1m1 1h1m1 0h1m1 1h1m1 1h1m1 1h1m1 0h1m1 1h1m1 1h1m1 0h1m1 1h1m1 1h1m1 0h1m1 1h1"/>
<path transform="translate(.5 0)" stroke="#00ffff" d="m226 177v2m4-3v2m4-2v2m8-3v2m4-2v2m4-3v2m4-2v2m8-3v2m4-2v2m8-3v2m8-3v2m12-3v2m20-4v3"/>
<path transform="translate(0 .5)" stroke="#007f7f" d="m388 136h5m-6 1h1m5 0h1m-8 1h1m7 0h1m-10 1h1m9 0h1m-11 6h1m9 0h1m-12 3h2m9 0h2m-14 1h1m13 0h1m-16 1h1m15 0h1m-16 1h1m1 0h1m9 0h1m1 0h1m-14 1h1m11 0h1m-22 18h1m371 166h3m-4 1h1m3 0h1m-6 5h1m5 0h1m-8 1h1m7 0h1m-8 1h1m5 0h1"/>
<path transform="translate(.5 0)" stroke="#007f7f" d="m384 140v5m2 1v5m8-5v5m2-11v5m349 193v3m1 0v3m4-3v3m1-6v3"/>
</g>
<g style="will-change:transform">
<text class="s" fill="#ffffff" stroke="#ffffff" x="605.5 611.5 617.5 623.5 629.5 635.5 641.5 647.5 653.5 659.5 665.5 671.5 677.5" y="14">Astrolog 5.40</text>
<text class="s" fill="#bfbfbf" stroke="#bfbfbf" x="605.5 611.5 617.5 623.5 629.5 635.5 641.5 647.5 653.5 659.5 665.5" y="24">&quot;Anonymous&quot;</text>
<text class="s" fill="#bfbfbf" stroke="#bfbfbf" x="605.5 611.5 617.5 623.5 629.5 635.5 641.5 647.5 653.5 659.5 665.5 671.5 677.5 683.5 689.5 695.5 701.5 707.5 713.5 719.5" y="34">Wed January 20, 2010</text>
<text class="s" fill="#bfbfbf" stroke="#bfbfbf" x="605.5 611.5 617.5 623.5 629.5 635.5 641.5 647.5 653.5 659.5 665.5 671.5 677.5 683.5 689.5 695.5 701.5 707.5 713.5 719.5 725.5 731.5" y="44">12:38pm (ST +8:00 GMT)</text>
<text class="s" fill="#bfbfbf" stroke="#bfbfbf" x="605.5 611.5 617.5 623.5 629.5 635.5 641.5 647.5" y="54">&quot;Taiwan&quot;</text>
<text class="s" fill="#bfbfbf" stroke="#bfbfbf" x="605.5 611.5 617.5 623.5 629.5 635.5 641.5 647.5 653.5 659.5 665.5 671.5 677.5 683.5" y="64">121°00E 25°00N</text>
<text class="s" fill="#bfbfbf" stroke="#bfbfbf" x="605.5 611.5 617.5 623.5 629.5 635.5 641.5 647.5 653.5 659.5 665.5 671.5 677.5 683.5 689.5 695.5" y="74">Placidus houses.</text>
<text class="s" fill="#bfbfbf" stroke="#bfbfbf" x="605.5 611.5 617.5 623.5 629.5 635.5 641.5 647.5 653.5 659.5 665.5 671.5 677.5 683.5 689.5 695.5 701.5 707.5 713.5 719.5 725.5" y="84">Tropical, Geocentric.</text>
<text class="s" fill="#bfbfbf" stroke="#bfbfbf" x="605.5 611.5 617.5 623.5 629.5 635.5 641.5 647.5 653.5 659.5 665.5 671.5 677.5 683.5 689.5 695.5 701.5 707.5 713.5 719.5 725.5 731.5 737.5 743.5 749.5" y="94">Julian Day = 2455216.6931</text>
<text class="s" fill="#ff0000" stroke="#ff0000" x="611.5 617.5 623.5 629.5 635.5 641.5 647.5 653.5 659.5 665.5" y="114">1st house:</text>
<text class="s" fill="#ffff00" stroke="#ffff00" x="677.5 683.5 689.5 695.5 701.5 707.5 713.5" y="114">21Tau07</text>
<text class="s" fill="#ffff00" stroke="#ffff00" x="611.5 617.5 623.5 629.5 635.5 641.5 647.5 653.5 659.5 665.5" y="124">2nd house:</text>
<text class="s" fill="#00ff00" stroke="#00ff00" x="677.5 683.5 689.5 695.5 701.5 707.5 713.5" y="124">18Gem33</text>
<text class="s" fill="#00ff00" stroke="#00ff00" x="611.5 617.5 623.5 629.5 635.5 641.5 647.5 653.5 659.5 665.5" y="134">3rd house:</text>
<text class="s" fill="#0000ff" stroke="#0000ff" x="677.5 683.5 689.5 695.5 701.5 707.5 713.5" y="134">12Can38</text>
<text class="s" fill="#0000ff" stroke="#0000ff" x="611.5 617.5 623.5 629.5 635.5 641.5 647.5 653.5 659.5 665.5" y="144">4th house:</text>
<text class="s" fill="#ff0000" stroke="#ff0000" x="683.5 689.5 695.5 701.5 707.5 713.5" y="144">7Leo33</text>
<text class="s" fill="#ff0000" stroke="#ff0000" x="611.5 617.5 623.5 629.5 635.5 641.5 647.5 653.5 659.5 665.5" y="154">5th house:</text>
<text class="s" fill="#ffff00" stroke="#ffff00" x="683.5 689.5 695.5 701.5 707.5 713.5" y="154">6Vir49</text>
<text class="s" fill="#ffff00" stroke="#ffff00" x="611.5 617.5 623.5 629.5 635.5 641.5 647.5 653.5 659.5 665.5" y="164">6th house:</text>
<text class="s" fill="#00ff00" stroke="#00ff00" x="677.5 683.5 689.5 695.5 701.5 707.5 713.5" y="164">12Lib30</text>
<text class="s" fill="#00ff00" stroke="#00ff00" x="611.5 617.5 623.5 629.5 635.5 641.5 647.5 653.5 659.5 665.5" y="174">7th house:</text>
<text class="s" fill="#0000ff" stroke="#0000ff" x="677.5 683.5 689.5 695.5 701.5 707.5 713.5" y="174">21Sco07</text>
<text class="s" fill="#0000ff" stroke="#0000ff" x="611.5 617.5 623.5 629.5 635.5 641.5 647.5 653.5 659.5 665.5" y="184">8th house:</text>
<text class="s" fill="#ff0000" stroke="#ff0000" x="677.5 683.5 689.5 695.5 701.5 707.5 713.5" y="184">18Sag33</text>
<text class="s" fill="#ff0000" stroke="#ff0000" x="611.5 617.5 623.5 629.5 635.5 641.5 647.5 653.5 659.5 665.5" y="194">9th house:</text>
<text class="s" fill="#ffff00" stroke="#ffff00" x="677.5 683.5 689.5 695.5 701.5 707.5 713.5" y="194">12Cap38</text>
<text class="s" fill="#ffff00" stroke="#ffff00" x="605.5 611.5 617.5 623.5 629.5 635.5 641.5 647.5 653.5 659.5 665.5" y="204">10th house:</text>
<text class="s" fill="#00ff00" stroke="#00ff00" x="683.5 689.5 695.5 701.5 707.5 713.5" y="204">7Aqu33</text>
<text class="s" fill="#00ff00" stroke="#00ff00" x="605.5 611.5 617.5 623.5 629.5 635.5 641.5 647.5 653.5 659.5 665.5" y="214">11th house:</text>
<text class="s" fill="#0000ff" stroke="#0000ff" x="683.5 689.5 695.5 701.5 707.5 713.5" y="214">6Pis49</text>
<text class="s" fill="#0000ff" stroke="#0000ff" x="605.5 611.5 617.5 623.5 629.5 635.5 641.5 647.5 653.5 659.5 665.5" y="224">12th house:</text>
<text class="s" fill="#ff0000" stroke="#ff0000" x="677.5 683.5 689.5 695.5 701.5 707.5 713.5" y="224">12Ari30</text>
<text class="s" fill="#ff0000" stroke="#ff0000" x="611.5 617.5 623.5 629.5" y="244">Sun:</text>
<text class="s" fill="#00ff00" stroke="#00ff00" x="647.5 653.5 659.5 665.5 671.5 677.5" y="244">0Aqu00</text>
<text class="s" fill="#bfbfbf" stroke="#bfbfbf" x="695.5 701.5 707.5 713.5 719.5 725.5 731.5" y="244">- 0°00&#x27;</text>
<text class="s" fill="#0000ff" stroke="#0000ff" x="605.5 611.5 617.5 623.5 629.5" y="254">Moon:</text>
<text class="s" fill="#0000ff" stroke="#0000ff" x="641.5 647.5 653.5 659.5 665.5 671.5 677.5" y="254">22Pis57</text>
<text class="s" fill="#bfbfbf" stroke="#bfbfbf" x="695.5 701.5 707.5 713.5 719.5 725.5 731.5" y="254">+ 4°40&#x27;</text>
<text class="s" fill="#00ff00" stroke="#00ff00" x="605.5 611.5 617.5 623.5 629.5" y="264">Merc:</text>
<text class="s" fill="#ffff00" stroke="#ffff00" x="647.5 653.5 659.5 665.5 671.5 677.5" y="264">6Cap49</text>
<text class="s" fill="#bfbfbf" stroke="#bfbfbf" x="695.5 701.5 707.5 713.5 719.5 725.5 731.5" y="264">+ 2°17&#x27;</text>
<text class="s" fill="#00ff00" stroke="#00ff00" x="605.5 611.5 617.5 623.5 629.5" y="274">Venu:</text>
<text class="s" fill="#00ff00" stroke="#00ff00" x="647.5 653.5 659.5 665.5 671.5 677.5" y="274">1Aqu59</text>
<text class="s" fill="#bfbfbf" stroke="#bfbfbf" x="695.5 701.5 707.5 713.5 719.5 725.5 731.5" y="274">- 1°04&#x27;</text>
<text class="s" fill="#ff0000" stroke="#ff0000" x="605.5 611.5 617.5 623.5 629.5" y="284">Mars:</text>
<text class="s" fill="#ff0000" stroke="#ff0000" x="641.5 647.5 653.5 659.5 665.5 671.5 677.5" y="284">13Leo34</text>
<text class="s" fill="#ffffff" stroke="#ffffff" x="683.5" y="284">R</text>
<text class="s" fill="#bfbfbf" stroke="#bfbfbf" x="695.5 701.5 707.5 713.5 719.5 725.5 731.5" y="284">+ 4°24&#x27;</text>
<text class="s" fill="#ff0000" stroke="#ff0000" x="605.5 611.5 617.5 623.5 629.5" y="294">Jupi:</text>
<text class="s" fill="#0000ff" stroke="#0000ff" x="647.5 653.5 659.5 665.5 671.5 677.5" y="294">0Pis29</text>
<text class="s" fill="#bfbfbf" stroke="#bfbfbf" x="695.5 701.5 707.5 713.5 719.5 725.5 731.5" y="294">- 0°55&#x27;</text>
<text class="s" fill="#ffff00" stroke="#ffff00" x="605.5 611.5 617.5 623.5 629.5" y="304">Satu:</text>
<text class="s" fill="#00ff00" stroke="#00ff00" x="647.5 653.5 659.5 665.5 671.5 677.5" y="304">4Lib31</text>
<text class="s" fill="#ffffff" stroke="#ffffff" x="683.5" y="304">R</text>
<text class="s" fill="#bfbfbf" stroke="#bfbfbf" x="695.5 701.5 707.5 713.5 719.5 725.5 731.5" y="304">+ 2°23&#x27;</text>
<text class="s" fill="#00ff00" stroke="#00ff00" x="605.5 611.5 617.5 623.5 629.5" y="314">Uran:</text>
<text class="s" fill="#0000ff" stroke="#0000ff" x="641.5 647.5 653.5 659.5 665.5 671.5 677.5" y="314">23Pis43</text>
<text class="s" fill="#bfbfbf" stroke="#bfbfbf" x="695.5 701.5 707.5 713.5 719.5 725.5 731.5" y="314">- 0°44&#x27;</text>
<text class="s" fill="#0000ff" stroke="#0000ff" x="605.5 611.5 617.5 623.5 629.5" y="324">Nept:</text>
<text class="s" fill="#00ff00" stroke="#00ff00" x="641.5 647.5 653.5 659.5 665.5 671.5 677.5" y="324">25Aqu12</text>
<text class="s" fill="#bfbfbf" stroke="#bfbfbf" x="695.5 701.5 707.5 713.5 719.5 725.5 731.5" y="324">- 0°25&#x27;</text>
<text class="s" fill="#0000ff" stroke="#0000ff" x="605.5 611.5 617.5 623.5 629.5" y="334">Plut:</text>
<text class="s" fill="#ffff00" stroke="#ffff00" x="647.5 653.5 659.5 665.5 671.5 677.5" y="334">3Cap58</text>
<text class="s" fill="#bfbfbf" stroke="#bfbfbf" x="695.5 701.5 707.5 713.5 719.5 725.5 731.5" y="334">+ 5°05&#x27;</text>
<text class="s" fill="#007f7f" stroke="#007f7f" x="605.5 611.5 617.5 623.5 629.5" y="344">Node:</text>
<text class="s" fill="#ffff00" stroke="#ffff00" x="641.5 647.5 653.5 659.5 665.5 671.5 677.5" y="344">20Cap37</text>
<text class="s" fill="#ffffff" stroke="#ffffff" x="683.5" y="344">R</text>
<text class="s" fill="#bfbfbf" stroke="#bfbfbf" x="695.5 701.5 707.5 713.5 719.5 725.5 731.5" y="344">+ 0°00&#x27;</text>
<text class="s" fill="#bfbfbf" stroke="#bfbfbf" x="605.5 611.5 617.5 623.5 629.5 635.5 641.5 647.5 653.5 659.5 665.5 671.5 677.5 683.5 689.5 695.5 701.5 707.5" y="364">Fire: 1, Earth: 4,</text>
<text class="s" fill="#bfbfbf" stroke="#bfbfbf" x="605.5 611.5 617.5 623.5 629.5 635.5 641.5 647.5 653.5 659.5 665.5 671.5 677.5 683.5 689.5 695.5 701.5" y="374">Air : 5, Water: 3</text>
<text class="s" fill="#bfbfbf" stroke="#bfbfbf" x="605.5 611.5 617.5 623.5 629.5 635.5 641.5 647.5 653.5 659.5 665.5 671.5 677.5 683.5 689.5 695.5 701.5 707.5 713.5 719.5 725.5 731.5" y="384">Car: 4, Fix: 6, Mut: 3</text>
<text class="s" fill="#bfbfbf" stroke="#bfbfbf" x="605.5 611.5 617.5 623.5 629.5 635.5 641.5 647.5 653.5 659.5 665.5 671.5 677.5 683.5 689.5" y="394">Yang: 6, Yin: 7</text>
<text class="s" fill="#bfbfbf" stroke="#bfbfbf" x="605.5 611.5 617.5 623.5 629.5 635.5 641.5 647.5 653.5 659.5 665.5 671.5 677.5 683.5 689.5 695.5 701.5 707.5 713.5 719.5 725.5 731.5" y="404">M: 9, N: 2, A: 4, D: 7</text>
<text class="s" fill="#bfbfbf" stroke="#bfbfbf" x="605.5 611.5 617.5 623.5 629.5 635.5 641.5 647.5 653.5 659.5 665.5 671.5 677.5 683.5 689.5 695.5 701.5 707.5 713.5 719.5 725.5 731.5" y="414">Ang: 3, Suc: 5, Cad: 3</text>
<text class="s" fill="#bfbfbf" stroke="#bfbfbf" x="605.5 611.5 617.5 623.5 629.5 635.5 641.5 647.5 653.5 659.5 665.5 671.5 677.5 683.5 689.5 695.5 701.5 707.5 713.5" y="424">Learn: 2, Share: 11</text>
<text class="o" font-size="12.6" fill="#ff0000" stroke="#ff0000" stroke-width=".18" text-anchor="middle" transform="translate(95.5 353) scale(0.74 1)">1</text>
<text class="o" font-size="12.6" fill="#ffff00" stroke="#ffff00" stroke-width=".18" text-anchor="middle" transform="translate(137.5 437) scale(0.74 1)">2</text>
<text class="o" font-size="12.6" fill="#00ff00" stroke="#00ff00" stroke-width=".18" text-anchor="middle" transform="translate(207.5 492) scale(0.74 1)">3</text>
<text class="o" font-size="12.6" fill="#0000ff" stroke="#0000ff" stroke-width=".18" text-anchor="middle" transform="translate(302.5 514) scale(0.74 1)">4</text>
<text class="o" font-size="12.6" fill="#ff0000" stroke="#ff0000" stroke-width=".18" text-anchor="middle" transform="translate(415.5 479) scale(0.74 1)">5</text>
<text class="o" font-size="12.6" fill="#ffff00" stroke="#ffff00" stroke-width=".18" text-anchor="middle" transform="translate(497.5 373) scale(0.74 1)">6</text>
<text class="o" font-size="12.6" fill="#00ff00" stroke="#00ff00" stroke-width=".18" text-anchor="middle" transform="translate(503.5 255) scale(0.74 1)">7</text>
<text class="o" font-size="12.6" fill="#0000ff" stroke="#0000ff" stroke-width=".18" text-anchor="middle" transform="translate(461.5 171) scale(0.74 1)">8</text>
<text class="o" font-size="12.6" fill="#ff0000" stroke="#ff0000" stroke-width=".18" text-anchor="middle" transform="translate(391.5 116) scale(0.74 1)">9</text>
<text class="o" font-size="12.6" fill="#ffff00" stroke="#ffff00" stroke-width=".18" text-anchor="middle" transform="translate(296.5 94) scale(0.74 1)" x="-5.405405405405405 5.405405405405405">10</text>
<text class="o" font-size="12.6" fill="#00ff00" stroke="#00ff00" stroke-width=".18" text-anchor="middle" transform="translate(183.5 129) scale(0.74 1)" x="-5.405405405405405 5.405405405405405">11</text>
<text class="o" font-size="12.6" fill="#0000ff" stroke="#0000ff" stroke-width=".18" text-anchor="middle" transform="translate(101.5 235) scale(0.74 1)" x="-5.405405405405405 5.405405405405405">12</text>
<text class="o" fill="#ffff00" stroke="#ffff00" stroke-width="0" font-size="23.3" y="132"><tspan x="328.0" textLength="10.9" lengthAdjust="spacingAndGlyphs">M</tspan><tspan x="339.5" textLength="6.9" lengthAdjust="spacingAndGlyphs">C</tspan></text>
<text class="o" fill="#ff0000" stroke="#ff0000" stroke-width="0" font-size="23.3" y="308"><tspan x="111" textLength="5.2" lengthAdjust="spacingAndGlyphs">A</tspan><tspan x="117.7" textLength="4.7" lengthAdjust="spacingAndGlyphs">s</tspan><tspan x="123.6" textLength="4.7" lengthAdjust="spacingAndGlyphs">c</tspan></text>
</g>
</svg>
</body></html>
